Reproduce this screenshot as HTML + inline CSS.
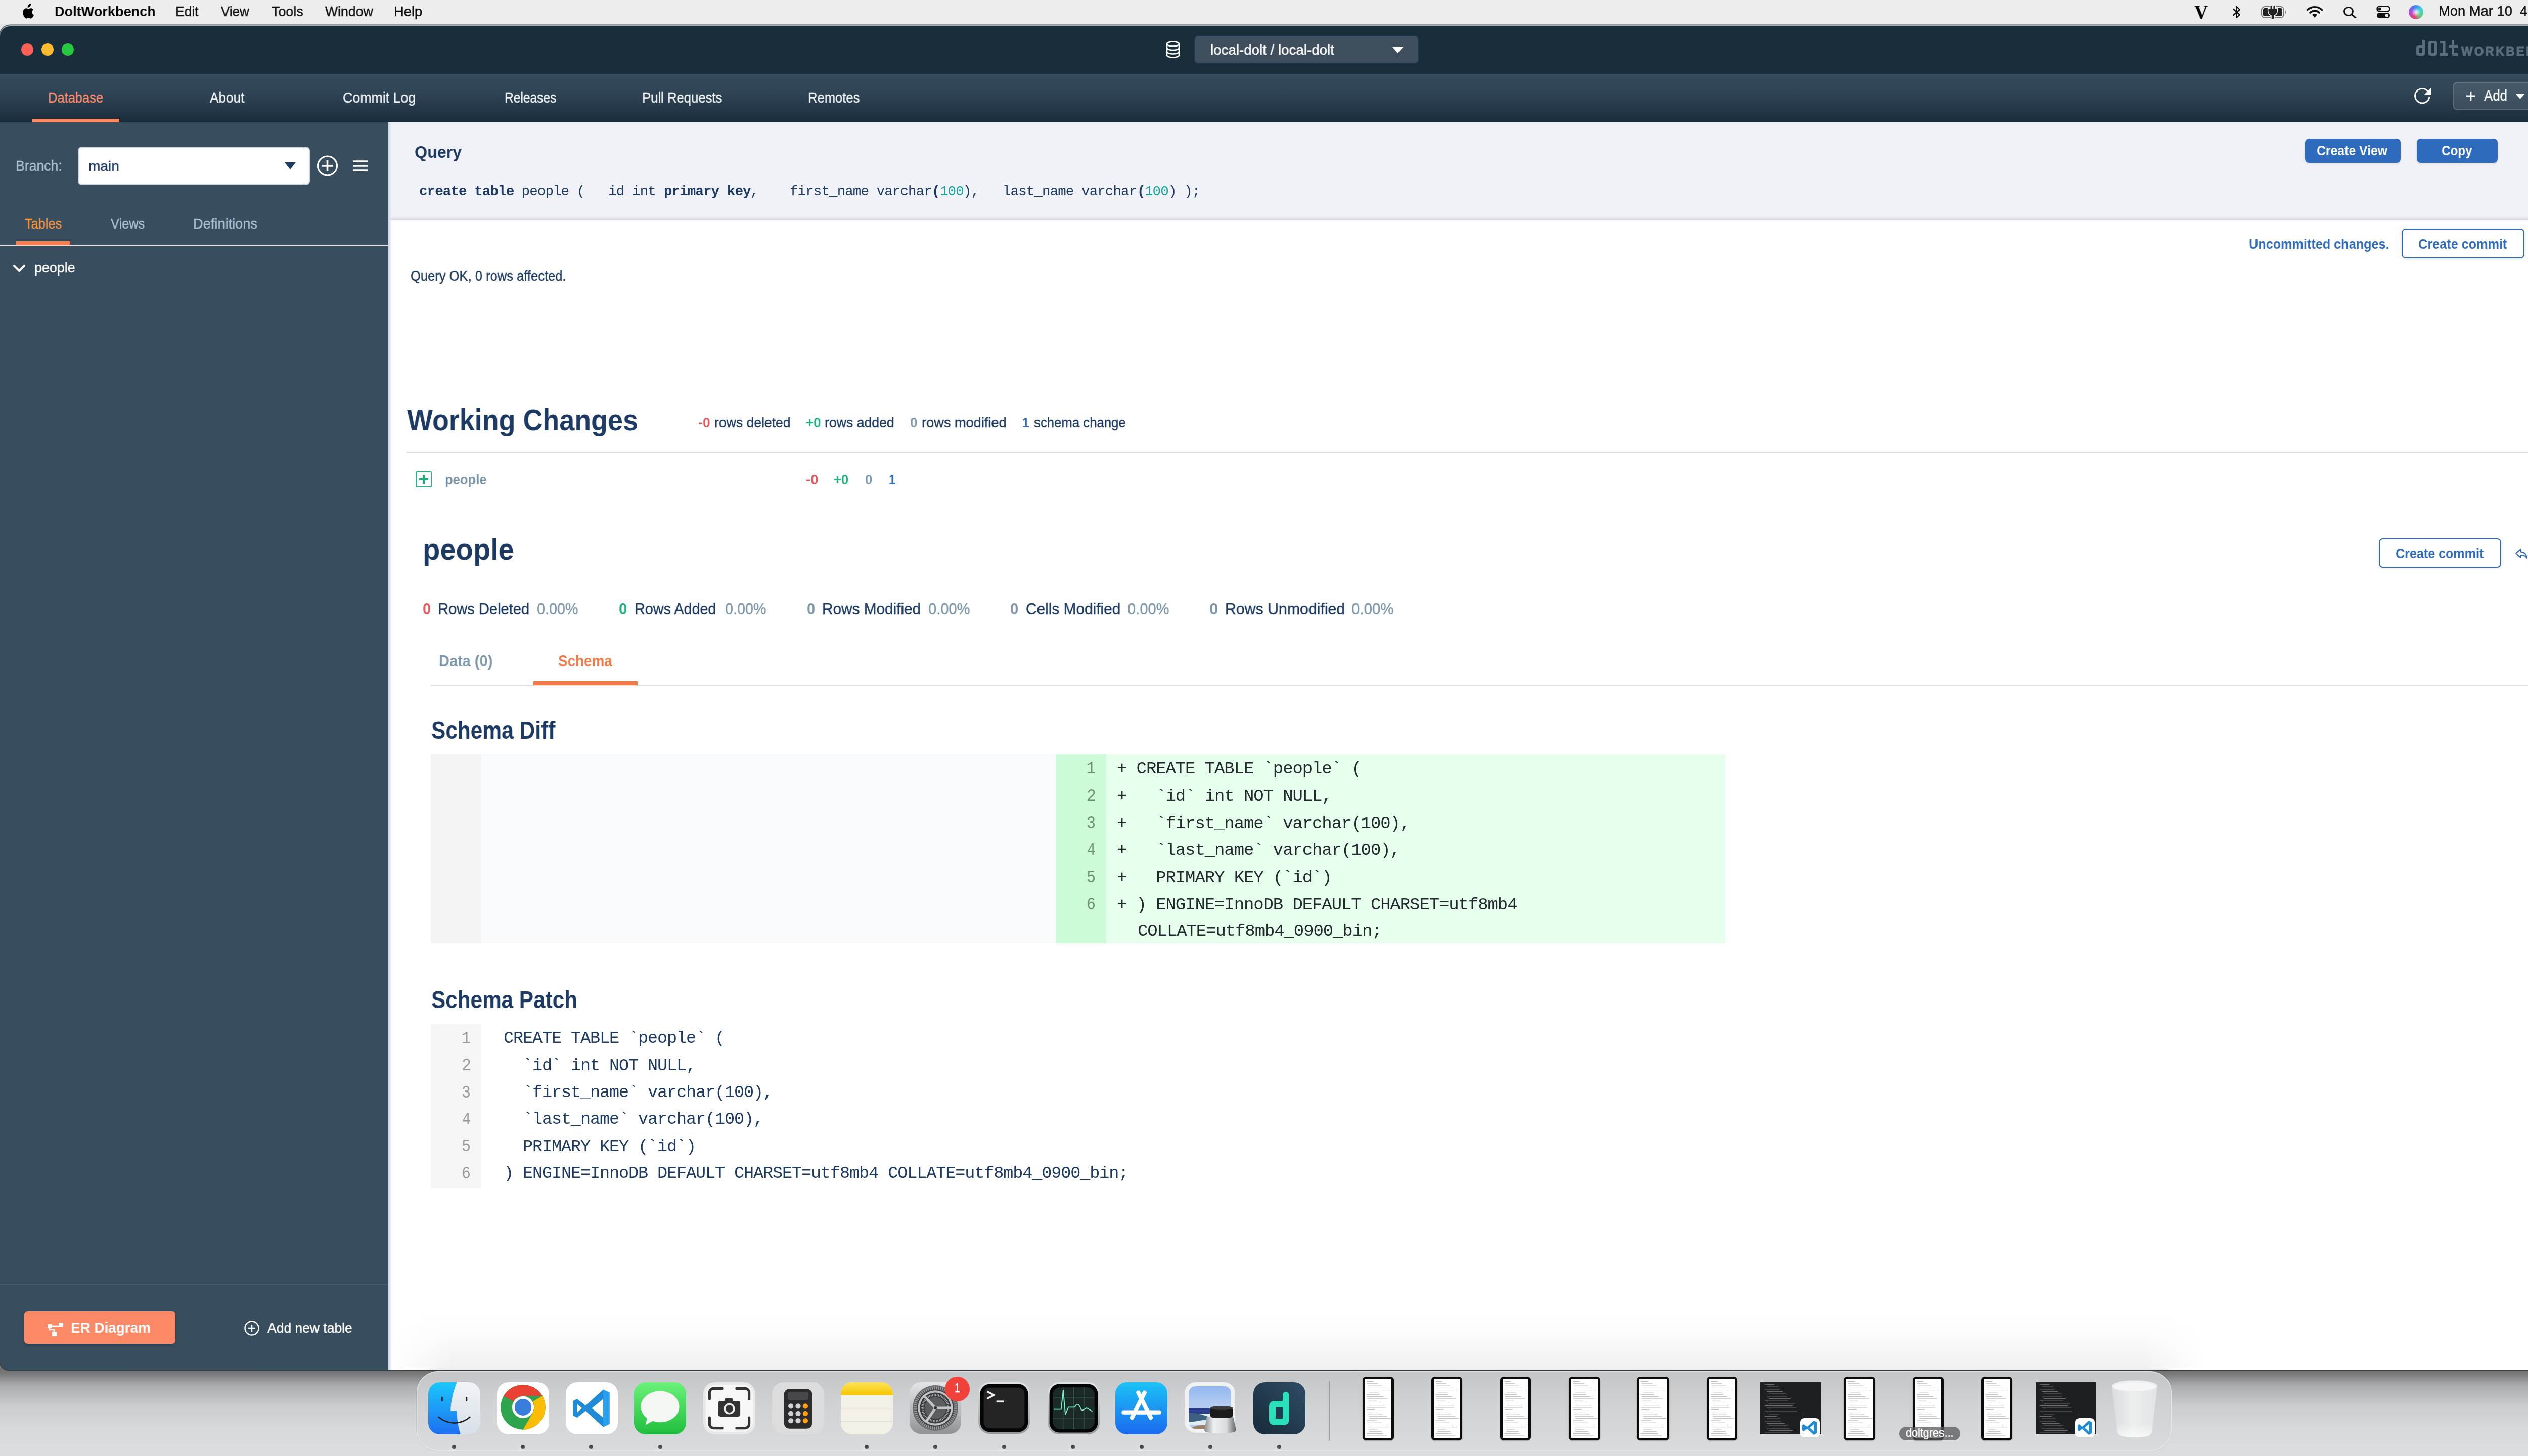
<!DOCTYPE html>
<html><head><meta charset="utf-8"><title>DoltWorkbench</title>
<style>
html,body{margin:0;padding:0;width:5120px;height:2880px;overflow:hidden;background:#dfe0e2;font-family:"Liberation Sans",sans-serif;}
#root{position:relative;width:5120px;height:2880px;overflow:hidden;}
</style></head><body><div id="root">
<div style="position:absolute;left:0px;top:0px;width:5120px;height:2880px;background:linear-gradient(180deg,#e3e4e6 0%,#dcdddf 100%);"></div>
<div style="position:absolute;left:0px;top:0px;width:5120px;height:48px;background:#ededed;"></div>
<div style="position:absolute;left:0px;top:2670px;width:5120px;height:210px;background:linear-gradient(180deg,rgba(0,0,0,0.45) 0px,rgba(0,0,0,0.5) 36px,rgba(0,0,0,0.45) 48px,rgba(0,0,0,0.22) 71px,rgba(0,0,0,0.08) 111px,rgba(0,0,0,0.02) 156px,rgba(0,0,0,0) 206px);"></div>
<div style="position:absolute;left:0px;top:49.5px;width:5118px;height:2660.5px;background:#384e5f;border-radius:20px 20px 18px 18px;overflow:hidden;box-shadow:0 0 0 1.5px rgba(40,44,48,0.75);"></div>
<div style="position:absolute;left:0px;top:49.5px;width:5118px;height:96.5px;background:#192d3b;border-radius:20px 20px 0 0;box-shadow:inset 0 2px 0 #a3adb9;"></div>
<div style="position:absolute;left:0px;top:146px;width:5118px;height:96px;background:linear-gradient(180deg,#354b5e 0%,#2e4354 40%,#243748 75%,#1a2d3c 98%,#122230 100%);"></div>
<div style="position:absolute;left:0px;top:242px;width:768px;height:2468px;background:#384e5f;border-radius:0 0 0 18px;"></div>
<div style="position:absolute;left:768px;top:242px;width:4350px;height:2468px;background:#ffffff;border-radius:0 0 18px 0;"></div>
<div style="position:absolute;left:768px;top:242px;width:4350px;height:194px;background:linear-gradient(180deg,#f0f2f8 0px,#f0f2f8 186px,#e4e6ee 190px,#d8dae2 193px,#e9eaef 194px);"></div>
<div style="position:absolute;left:768px;top:242px;width:7px;height:2468px;background:linear-gradient(90deg,#cdd9e6 0%,#d6e0ea 30%,rgba(226,232,242,0.6) 70%,rgba(255,255,255,0) 100%);"></div>
<svg style="position:absolute;left:40px;top:7px;" width="28" height="32" viewBox="0 0 28 32" preserveAspectRatio="none"><path fill="#000" d="M19.6 5.1c1.2-1.5 2-3.5 1.8-5.1-1.7.1-3.8 1.2-5 2.6-1.1 1.3-2 3.3-1.8 5.2 1.9.2 3.8-1 5-2.7zM23.4 17c0-3.4 2.8-5 2.9-5.1-1.6-2.3-4-2.6-4.9-2.6-2.1-.2-4.1 1.2-5.1 1.2-1.1 0-2.7-1.2-4.4-1.2-2.3 0-4.4 1.3-5.5 3.4-2.4 4.1-.6 10.2 1.7 13.5 1.1 1.6 2.5 3.5 4.2 3.4 1.7-.1 2.3-1.1 4.4-1.1 2 0 2.6 1.1 4.4 1.1 1.8 0 3-1.7 4.1-3.3 1.3-1.9 1.8-3.7 1.8-3.8-.1 0-3.6-1.4-3.6-5.5z"/></svg>
<div style="position:absolute;left:108.01px;top:8.97px;font-family:'Liberation Sans', sans-serif;font-size:27.33px;line-height:27.33px;font-weight:700;color:#000;white-space:pre;will-change:transform;transform-origin:0 23.13px;transform:scale(0.9918,1.0000);">DoltWorkbench</div>
<div style="position:absolute;left:347.06px;top:8.97px;font-family:'Liberation Sans', sans-serif;font-size:27.33px;line-height:27.33px;font-weight:400;color:#111;white-space:pre;will-change:transform;-webkit-text-stroke:0.45px #111;transform-origin:0 23.13px;transform:scale(0.9676,1.0000);">Edit</div>
<div style="position:absolute;left:437.00px;top:8.97px;font-family:'Liberation Sans', sans-serif;font-size:27.33px;line-height:27.33px;font-weight:400;color:#111;white-space:pre;will-change:transform;-webkit-text-stroke:0.45px #111;transform-origin:0 23.13px;transform:scale(0.9494,1.0000);">View</div>
<div style="position:absolute;left:537.00px;top:8.97px;font-family:'Liberation Sans', sans-serif;font-size:27.33px;line-height:27.33px;font-weight:400;color:#111;white-space:pre;will-change:transform;-webkit-text-stroke:0.45px #111;transform-origin:0 23.13px;transform:scale(0.9825,1.0000);">Tools</div>
<div style="position:absolute;left:643.00px;top:8.97px;font-family:'Liberation Sans', sans-serif;font-size:27.33px;line-height:27.33px;font-weight:400;color:#111;white-space:pre;will-change:transform;-webkit-text-stroke:0.45px #111;transform-origin:0 23.13px;transform:scale(0.9752,1.0000);">Window</div>
<div style="position:absolute;left:779.00px;top:8.97px;font-family:'Liberation Sans', sans-serif;font-size:27.33px;line-height:27.33px;font-weight:400;color:#111;white-space:pre;will-change:transform;-webkit-text-stroke:0.45px #111;">Help</div>
<div style="position:absolute;left:4822.95px;top:9.16px;font-family:'Liberation Sans', sans-serif;font-size:26.74px;line-height:26.74px;font-weight:400;color:#111;white-space:pre;will-change:transform;-webkit-text-stroke:0.45px #111;transform-origin:0 22.64px;transform:scale(1.0231,1.0000);">Mon Mar 10</div>
<div style="position:absolute;left:4984.00px;top:9.16px;font-family:'Liberation Sans', sans-serif;font-size:26.74px;line-height:26.74px;font-weight:400;color:#111;white-space:pre;will-change:transform;-webkit-text-stroke:0.45px #111;transform-origin:0 22.64px;transform:scale(0.9869,1.0000);">4:06 PM</div>
<div style="position:absolute;left:4340.00px;top:4.28px;font-family:'Liberation Serif', serif;font-size:39.24px;line-height:39.24px;font-weight:700;color:#000;white-space:pre;will-change:transform;transform-origin:0 33.22px;transform:scale(0.9643,1.0000);">V</div>
<svg style="position:absolute;left:4412px;top:10px;" width="23" height="28" viewBox="0 0 22 28" preserveAspectRatio="none"><path d="M5 8 L17 19 L11 25 V3 L17 9 L5 20" fill="none" stroke="#111" stroke-width="2.4" stroke-linejoin="round" stroke-linecap="round"/></svg>
<svg style="position:absolute;left:4470px;top:10px;" width="55" height="28" viewBox="0 0 55 28" preserveAspectRatio="none"><rect x="3" y="3" width="44" height="22" rx="6.5" fill="none" stroke="#7a7a7a" stroke-width="2"/><rect x="6" y="6" width="38" height="16" rx="3.5" fill="#222"/><path d="M50 10 Q53 14 50 18 Z" fill="#888"/><g stroke="#ededed" stroke-width="3.2" fill="#ededed"><rect x="20.5" y="1" width="3" height="7"/><rect x="26.5" y="1" width="3" height="7"/><path d="M16.5 7 H33.5 V12 a8.5 8.5 0 0 1 -17 0 Z"/><rect x="22.8" y="19" width="4.4" height="8"/></g><g fill="#222"><rect x="20.5" y="1" width="3" height="7"/><rect x="26.5" y="1" width="3" height="7"/><path d="M16.5 7 H33.5 V12 a8.5 8.5 0 0 1 -17 0 Z"/><rect x="22.8" y="19" width="4.4" height="8"/></g></svg>
<svg style="position:absolute;left:4560px;top:11px;" width="36" height="25" viewBox="0 0 36 25" preserveAspectRatio="none"><path d="M18 24 L13 18 A8 8 0 0 1 23 18 Z" fill="#111"/><path d="M9 14 A13 13 0 0 1 27 14" fill="none" stroke="#111" stroke-width="3.6" stroke-linecap="round"/><path d="M3.5 8.5 A21 21 0 0 1 32.5 8.5" fill="none" stroke="#111" stroke-width="3.6" stroke-linecap="round"/></svg>
<svg style="position:absolute;left:4634px;top:12px;" width="27" height="24" viewBox="0 0 27 25" preserveAspectRatio="none"><circle cx="11" cy="11" r="8.5" fill="none" stroke="#111" stroke-width="3"/><path d="M17 17 L25 24" stroke="#111" stroke-width="3.2" stroke-linecap="round"/></svg>
<svg style="position:absolute;left:4700px;top:11px;" width="28" height="26" viewBox="0 0 28 26" preserveAspectRatio="none"><rect x="1.5" y="1.5" width="25" height="10" rx="5" fill="none" stroke="#111" stroke-width="2.6"/><circle cx="7" cy="6.5" r="3" fill="#111"/><rect x="1" y="14" width="26" height="11" rx="5.5" fill="#111"/><circle cx="21" cy="19.5" r="3.2" fill="#eee"/></svg>
<div style="position:absolute;left:4764px;top:10px;width:29px;height:28px;border-radius:50%;background:radial-gradient(circle at 50% 50%,rgba(255,255,255,0.9) 0,rgba(255,255,255,0) 45%),conic-gradient(from 200deg,#e8407a,#b347d8,#3f7ef0,#3fd0d8,#5fd080,#e8407a);"></div>
<div style="position:absolute;left:42px;top:86px;width:24px;height:24px;background:#fe5f57;border-radius:50%;"></div>
<div style="position:absolute;left:82px;top:86px;width:24px;height:24px;background:#febc2e;border-radius:50%;"></div>
<div style="position:absolute;left:122px;top:86px;width:24px;height:24px;background:#28c840;border-radius:50%;"></div>
<svg style="position:absolute;left:2304px;top:81px;" width="32" height="34" viewBox="0 0 32 34" preserveAspectRatio="none"><ellipse cx="16" cy="6" rx="12" ry="4.5" fill="none" stroke="#fff" stroke-width="2.6"/><path d="M4 6 V28 A12 4.5 0 0 0 28 28 V6" fill="none" stroke="#fff" stroke-width="2.6"/><path d="M4 13.5 A12 4.5 0 0 0 28 13.5 M4 21 A12 4.5 0 0 0 28 21" fill="none" stroke="#fff" stroke-width="2.6"/></svg>
<div style="position:absolute;left:2362px;top:70px;width:444px;height:56px;background:#3e4e5c;border:2px solid #1f3656;border-radius:7px;box-sizing:border-box;"></div>
<div style="position:absolute;left:2394.02px;top:83.61px;font-family:'Liberation Sans', sans-serif;font-size:28.34px;line-height:28.34px;font-weight:400;color:#ffffff;white-space:pre;will-change:transform;-webkit-text-stroke:0.45px #ffffff;transform-origin:0 23.99px;transform:scale(0.9780,1.0000);">local-dolt / local-dolt</div>
<svg style="position:absolute;left:2754px;top:93px;" width="21" height="12" viewBox="0 0 21 12" preserveAspectRatio="none"><path d="M0 0 H21 L10.5 12 Z" fill="#fff"/></svg>
<svg style="position:absolute;left:4779px;top:79px;" width="82" height="32" viewBox="0 0 82 32" preserveAspectRatio="none"><g fill="#5c6e7d"><path d="M12 0 H17 V27 a4 4 0 0 1 -4 4 H4 a4 4 0 0 1 -4 -4 V15 a4 4 0 0 1 4 -4 H12 Z M5 16 V26 H12 V16 Z"/><path d="M28 2 H37 a4 4 0 0 1 4 4 V27 a4 4 0 0 1 -4 4 H28 a4 4 0 0 1 -4 -4 V6 a4 4 0 0 1 4 -4 Z M29 7 V26 H36 V7 Z"/><path d="M47 2 H57.5 V26 H63 V31 H47 V26 H52.5 V7 H47 Z"/><path d="M70 0 H75 V10 H82 V15 H75 V26 H82 V31 H74 a4 4 0 0 1 -4 -4 V15 H65 V10 H70 Z"/></g></svg>
<div style="position:absolute;left:4868.00px;top:88.35px;font-family:'Liberation Sans', sans-serif;font-size:26.16px;line-height:26.16px;font-weight:700;color:#5c6e7d;white-space:pre;will-change:transform;letter-spacing:3.5px;transform-origin:0 22.15px;transform:scale(0.9117,1.0000);-webkit-text-stroke:1.2px #5c6e7d;">WORKBENCH</div>
<div style="position:absolute;left:95.28px;top:177.90px;font-family:'Liberation Sans', sans-serif;font-size:29.65px;line-height:29.65px;font-weight:400;color:#f98b6c;white-space:pre;will-change:transform;-webkit-text-stroke:0.45px #f98b6c;transform-origin:0 25.10px;transform:scale(0.8601,1.0000);">Database</div>
<div style="position:absolute;left:64px;top:235px;width:172px;height:7px;background:#fc8a63;"></div>
<div style="position:absolute;left:415.00px;top:177.90px;font-family:'Liberation Sans', sans-serif;font-size:29.65px;line-height:29.65px;font-weight:400;color:#eef2f5;white-space:pre;will-change:transform;-webkit-text-stroke:0.45px #eef2f5;transform-origin:0 25.10px;transform:scale(0.8821,1.0000);">About</div>
<div style="position:absolute;left:678.10px;top:177.90px;font-family:'Liberation Sans', sans-serif;font-size:29.65px;line-height:29.65px;font-weight:400;color:#eef2f5;white-space:pre;will-change:transform;-webkit-text-stroke:0.45px #eef2f5;transform-origin:0 25.10px;transform:scale(0.9028,1.0000);">Commit Log</div>
<div style="position:absolute;left:998.34px;top:177.90px;font-family:'Liberation Sans', sans-serif;font-size:29.65px;line-height:29.65px;font-weight:400;color:#eef2f5;white-space:pre;will-change:transform;-webkit-text-stroke:0.45px #eef2f5;transform-origin:0 25.10px;transform:scale(0.8282,1.0000);">Releases</div>
<div style="position:absolute;left:1270.27px;top:177.90px;font-family:'Liberation Sans', sans-serif;font-size:29.65px;line-height:29.65px;font-weight:400;color:#eef2f5;white-space:pre;will-change:transform;-webkit-text-stroke:0.45px #eef2f5;transform-origin:0 25.10px;transform:scale(0.8664,1.0000);">Pull Requests</div>
<div style="position:absolute;left:1598.27px;top:177.90px;font-family:'Liberation Sans', sans-serif;font-size:29.65px;line-height:29.65px;font-weight:400;color:#eef2f5;white-space:pre;will-change:transform;-webkit-text-stroke:0.45px #eef2f5;transform-origin:0 25.10px;transform:scale(0.8637,1.0000);">Remotes</div>
<svg style="position:absolute;left:4774px;top:172px;" width="36" height="36" viewBox="0 0 36 36" preserveAspectRatio="none"><path d="M29.5 11 A14.3 14.3 0 1 0 31 19.5" fill="none" stroke="#fff" stroke-width="2.8"/><path d="M34 2 V15.5 H20.5 Z" fill="#fff"/></svg>
<div style="position:absolute;left:4852px;top:162px;width:159px;height:56px;background:rgba(255,255,255,0.10);border:2px solid rgba(255,255,255,0.16);border-radius:8px;box-sizing:border-box;"></div>
<svg style="position:absolute;left:4877px;top:180px;" width="20" height="20" viewBox="0 0 20 20" preserveAspectRatio="none"><path d="M10 1 V19 M1 10 H19" stroke="#fff" stroke-width="2.8"/></svg>
<div style="position:absolute;left:4913.00px;top:175.39px;font-family:'Liberation Sans', sans-serif;font-size:29.07px;line-height:29.07px;font-weight:400;color:#ffffff;white-space:pre;will-change:transform;-webkit-text-stroke:0.45px #ffffff;transform-origin:0 24.61px;transform:scale(0.8906,1.0000);">Add</div>
<svg style="position:absolute;left:4976px;top:186px;" width="17" height="10" viewBox="0 0 17 10" preserveAspectRatio="none"><path d="M0 0 H17 L8.5 10 Z" fill="#fff"/></svg>
<div style="position:absolute;left:31.16px;top:313.52px;font-family:'Liberation Sans', sans-serif;font-size:28.92px;line-height:28.92px;font-weight:400;color:#a8bfd2;white-space:pre;will-change:transform;-webkit-text-stroke:0.45px #a8bfd2;transform-origin:0 24.48px;transform:scale(0.9206,1.0000);">Branch:</div>
<div style="position:absolute;left:154px;top:290px;width:459px;height:76px;background:#fff;border:2px solid #cbd3db;border-radius:8px;box-sizing:border-box;"></div>
<div style="position:absolute;left:175.01px;top:314.01px;font-family:'Liberation Sans', sans-serif;font-size:28.34px;line-height:28.34px;font-weight:400;color:#1c3a63;white-space:pre;will-change:transform;-webkit-text-stroke:0.45px #1c3a63;transform-origin:0 23.99px;transform:scale(0.9890,1.0000);">main</div>
<svg style="position:absolute;left:563px;top:321px;" width="22" height="14" viewBox="0 0 22 14" preserveAspectRatio="none"><path d="M0 0 H22 L11 14 Z" fill="#1c3a63"/></svg>
<svg style="position:absolute;left:626px;top:307px;" width="43" height="42" viewBox="0 0 43 42" preserveAspectRatio="none"><circle cx="21.5" cy="21" r="19" fill="none" stroke="#fff" stroke-width="3.2"/><path d="M21.5 10 V32 M10.5 21 H32.5" stroke="#fff" stroke-width="3.6"/></svg>
<svg style="position:absolute;left:698px;top:317px;" width="29" height="22" viewBox="0 0 29 22" preserveAspectRatio="none"><path d="M0 2 H29 M0 11 H29 M0 20 H29" stroke="#fff" stroke-width="3.6"/></svg>
<div style="position:absolute;left:49.00px;top:428.01px;font-family:'Liberation Sans', sans-serif;font-size:28.34px;line-height:28.34px;font-weight:400;color:#f5923e;white-space:pre;will-change:transform;-webkit-text-stroke:0.45px #f5923e;transform-origin:0 23.99px;transform:scale(0.8933,1.0000);">Tables</div>
<div style="position:absolute;left:219.00px;top:428.01px;font-family:'Liberation Sans', sans-serif;font-size:28.34px;line-height:28.34px;font-weight:400;color:#a8c0d4;white-space:pre;will-change:transform;-webkit-text-stroke:0.45px #a8c0d4;transform-origin:0 23.99px;transform:scale(0.8947,1.0000);">Views</div>
<div style="position:absolute;left:382.08px;top:428.01px;font-family:'Liberation Sans', sans-serif;font-size:28.34px;line-height:28.34px;font-weight:400;color:#a8c0d4;white-space:pre;will-change:transform;-webkit-text-stroke:0.45px #a8c0d4;transform-origin:0 23.99px;transform:scale(0.9608,1.0000);">Definitions</div>
<div style="position:absolute;left:0px;top:484px;width:768px;height:3px;background:#dde3e8;"></div>
<div style="position:absolute;left:32px;top:477px;width:107px;height:8px;background:#f97c4b;"></div>
<svg style="position:absolute;left:25px;top:522px;" width="26" height="19" viewBox="0 0 26 19" preserveAspectRatio="none"><path d="M3 4 L13 14 L23 4" fill="none" stroke="#fff" stroke-width="4.2" stroke-linecap="round" stroke-linejoin="round"/></svg>
<div style="position:absolute;left:68.05px;top:515.01px;font-family:'Liberation Sans', sans-serif;font-size:28.34px;line-height:28.34px;font-weight:400;color:#ffffff;white-space:pre;will-change:transform;-webkit-text-stroke:0.45px #ffffff;transform-origin:0 23.99px;transform:scale(0.9482,1.0000);">people</div>
<div style="position:absolute;left:0px;top:2540px;width:768px;height:2px;background:#465b6b;"></div>
<div style="position:absolute;left:48px;top:2594px;width:299px;height:64px;background:#fd8a66;border-radius:7px;box-shadow:0 2px 6px rgba(0,0,0,0.18);"></div>
<svg style="position:absolute;left:94px;top:2616px;" width="32" height="28" viewBox="0 0 32 28" preserveAspectRatio="none"><rect x="0" y="3" width="9" height="8" rx="1" fill="#fff"/><rect x="22" y="0" width="9" height="8" rx="1" fill="#fff"/><rect x="9" y="18" width="9" height="9" rx="1" fill="#fff"/><path d="M4 10 V14 H13 V18 M9 7 H22" stroke="#fff" stroke-width="2.4" fill="none"/></svg>
<div style="position:absolute;left:140.04px;top:2612.39px;font-family:'Liberation Sans', sans-serif;font-size:29.07px;line-height:29.07px;font-weight:700;color:#ffffff;white-space:pre;will-change:transform;transform-origin:0 24.61px;transform:scale(0.9581,1.0000);">ER Diagram</div>
<svg style="position:absolute;left:482px;top:2611px;" width="32" height="32" viewBox="0 0 32 32" preserveAspectRatio="none"><circle cx="16" cy="16" r="13.5" fill="none" stroke="#fff" stroke-width="2.4"/><path d="M16 9 V23 M9 16 H23" stroke="#fff" stroke-width="2.4"/></svg>
<div style="position:absolute;left:529.00px;top:2612.01px;font-family:'Liberation Sans', sans-serif;font-size:28.34px;line-height:28.34px;font-weight:400;color:#ffffff;white-space:pre;will-change:transform;-webkit-text-stroke:0.45px #ffffff;transform-origin:0 23.99px;transform:scale(0.9341,1.0000);">Add new table</div>
<div style="position:absolute;left:820.01px;top:285.32px;font-family:'Liberation Sans', sans-serif;font-size:32.70px;line-height:32.70px;font-weight:700;color:#1c3a63;white-space:pre;will-change:transform;transform-origin:0 27.68px;transform:scale(0.9861,1.0000);">Query</div>
<div style="position:absolute;left:4559px;top:274px;width:189px;height:48px;background:#2e6bbd;border-radius:8px;box-shadow:0 2px 5px rgba(0,0,0,0.12);"></div>
<div style="position:absolute;left:4582.13px;top:283.01px;font-family:'Liberation Sans', sans-serif;font-size:28.34px;line-height:28.34px;font-weight:700;color:#fff;white-space:pre;will-change:transform;transform-origin:0 23.99px;transform:scale(0.8747,1.0000);">Create View</div>
<div style="position:absolute;left:4780px;top:274px;width:160px;height:48px;background:#2e6bbd;border-radius:8px;box-shadow:0 2px 5px rgba(0,0,0,0.12);"></div>
<div style="position:absolute;left:4829.14px;top:283.01px;font-family:'Liberation Sans', sans-serif;font-size:28.34px;line-height:28.34px;font-weight:700;color:#fff;white-space:pre;will-change:transform;transform-origin:0 23.99px;transform:scale(0.8563,1.0000);">Copy</div>
<svg style="position:absolute;left:5005px;top:285px;" width="34" height="21" viewBox="0 0 34 21" preserveAspectRatio="none"><path d="M4 17 L17 4 L30 17" fill="none" stroke="#1b2f4d" stroke-width="6" stroke-linecap="round" stroke-linejoin="round"/></svg>
<div style="position:absolute;left:829.00px;top:364.94px;font-family:'Liberation Mono', monospace;font-size:27.50px;line-height:27.50px;font-weight:700;color:#1c3a63;white-space:pre;will-change:transform;letter-spacing:-0.9px;">create table</div>
<div style="position:absolute;left:1016.20px;top:364.94px;font-family:'Liberation Mono', monospace;font-size:27.50px;line-height:27.50px;font-weight:400;color:#1c3a63;white-space:pre;will-change:transform;letter-spacing:-0.9px;"> people (   id int </div>
<div style="position:absolute;left:1312.60px;top:364.94px;font-family:'Liberation Mono', monospace;font-size:27.50px;line-height:27.50px;font-weight:700;color:#1c3a63;white-space:pre;will-change:transform;letter-spacing:-0.9px;">primary key</div>
<div style="position:absolute;left:1484.20px;top:364.94px;font-family:'Liberation Mono', monospace;font-size:27.50px;line-height:27.50px;font-weight:400;color:#1c3a63;white-space:pre;will-change:transform;letter-spacing:-0.9px;">,    first_name varchar</div>
<div style="position:absolute;left:1843.00px;top:364.94px;font-family:'Liberation Mono', monospace;font-size:27.50px;line-height:27.50px;font-weight:700;color:#1c3a63;white-space:pre;will-change:transform;letter-spacing:-0.9px;">(</div>
<div style="position:absolute;left:1858.60px;top:364.94px;font-family:'Liberation Mono', monospace;font-size:27.50px;line-height:27.50px;font-weight:400;color:#1aa39b;white-space:pre;will-change:transform;letter-spacing:-0.9px;">100</div>
<div style="position:absolute;left:1905.40px;top:364.94px;font-family:'Liberation Mono', monospace;font-size:27.50px;line-height:27.50px;font-weight:400;color:#1c3a63;white-space:pre;will-change:transform;letter-spacing:-0.9px;">),   last_name varchar</div>
<div style="position:absolute;left:2248.60px;top:364.94px;font-family:'Liberation Mono', monospace;font-size:27.50px;line-height:27.50px;font-weight:700;color:#1c3a63;white-space:pre;will-change:transform;letter-spacing:-0.9px;">(</div>
<div style="position:absolute;left:2264.20px;top:364.94px;font-family:'Liberation Mono', monospace;font-size:27.50px;line-height:27.50px;font-weight:400;color:#1aa39b;white-space:pre;will-change:transform;letter-spacing:-0.9px;">100</div>
<div style="position:absolute;left:2311.00px;top:364.94px;font-family:'Liberation Mono', monospace;font-size:27.50px;line-height:27.50px;font-weight:400;color:#1c3a63;white-space:pre;will-change:transform;letter-spacing:-0.9px;">) );</div>
<div style="position:absolute;left:4448.11px;top:468.01px;font-family:'Liberation Sans', sans-serif;font-size:28.34px;line-height:28.34px;font-weight:700;color:#2e6bbd;white-space:pre;will-change:transform;transform-origin:0 23.99px;transform:scale(0.8906,1.0000);">Uncommitted changes.</div>
<div style="position:absolute;left:4750px;top:452px;width:243px;height:59px;background:#fff;border:2px solid #2e6bbd;border-radius:8px;box-sizing:border-box;box-shadow:0 2px 5px rgba(0,0,0,0.10);"></div>
<div style="position:absolute;left:4783.11px;top:468.01px;font-family:'Liberation Sans', sans-serif;font-size:28.34px;line-height:28.34px;font-weight:700;color:#2e6bbd;white-space:pre;will-change:transform;transform-origin:0 23.99px;transform:scale(0.8912,1.0000);">Create commit</div>
<svg style="position:absolute;left:5019px;top:471px;" width="26" height="22" viewBox="0 0 25 22" preserveAspectRatio="none"><path d="M11 3 L2 11 L11 19 V14.5 C16 14 20 15.5 23 20 C22 13 18 8.5 11 8 Z" fill="none" stroke="#2e6bbd" stroke-width="2" stroke-linejoin="round"/></svg>
<div style="position:absolute;left:812.10px;top:531.01px;font-family:'Liberation Sans', sans-serif;font-size:28.34px;line-height:28.34px;font-weight:400;color:#1c3a63;white-space:pre;will-change:transform;-webkit-text-stroke:0.45px #1c3a63;transform-origin:0 23.99px;transform:scale(0.9016,1.0000);">Query OK, 0 rows affected.</div>
<div style="position:absolute;left:805.00px;top:801.05px;font-family:'Liberation Sans', sans-serif;font-size:59.59px;line-height:59.59px;font-weight:700;color:#1c3a63;white-space:pre;will-change:transform;transform-origin:0 50.45px;transform:scale(0.9042,1.0000);">Working Changes</div>
<div style="position:absolute;left:1381.06px;top:820.51px;font-family:'Liberation Sans', sans-serif;font-size:28.34px;line-height:28.34px;font-weight:600;color:#e4575c;white-space:pre;will-change:transform;transform-origin:0 23.99px;transform:scale(0.9388,1.0000);">-0</div>
<div style="position:absolute;left:1413.06px;top:820.51px;font-family:'Liberation Sans', sans-serif;font-size:28.34px;line-height:28.34px;font-weight:400;color:#1c3a63;white-space:pre;will-change:transform;-webkit-text-stroke:0.45px #1c3a63;transform-origin:0 23.99px;transform:scale(0.9375,1.0000);">rows deleted</div>
<div style="position:absolute;left:1594.08px;top:820.51px;font-family:'Liberation Sans', sans-serif;font-size:28.34px;line-height:28.34px;font-weight:600;color:#1fb27a;white-space:pre;will-change:transform;transform-origin:0 23.99px;transform:scale(0.9167,1.0000);">+0</div>
<div style="position:absolute;left:1631.06px;top:820.51px;font-family:'Liberation Sans', sans-serif;font-size:28.34px;line-height:28.34px;font-weight:400;color:#1c3a63;white-space:pre;will-change:transform;-webkit-text-stroke:0.45px #1c3a63;transform-origin:0 23.99px;transform:scale(0.9395,1.0000);">rows added</div>
<div style="position:absolute;left:1800.07px;top:820.51px;font-family:'Liberation Sans', sans-serif;font-size:28.34px;line-height:28.34px;font-weight:600;color:#7d97ac;white-space:pre;will-change:transform;transform-origin:0 23.99px;transform:scale(0.9286,1.0000);">0</div>
<div style="position:absolute;left:1823.04px;top:820.51px;font-family:'Liberation Sans', sans-serif;font-size:28.34px;line-height:28.34px;font-weight:400;color:#1c3a63;white-space:pre;will-change:transform;-webkit-text-stroke:0.45px #1c3a63;transform-origin:0 23.99px;transform:scale(0.9593,1.0000);">rows modified</div>
<div style="position:absolute;left:2022.14px;top:820.51px;font-family:'Liberation Sans', sans-serif;font-size:28.34px;line-height:28.34px;font-weight:600;color:#2e6bbd;white-space:pre;will-change:transform;transform-origin:0 23.99px;transform:scale(0.8571,1.0000);">1</div>
<div style="position:absolute;left:2045.00px;top:820.51px;font-family:'Liberation Sans', sans-serif;font-size:28.34px;line-height:28.34px;font-weight:400;color:#1c3a63;white-space:pre;will-change:transform;-webkit-text-stroke:0.45px #1c3a63;transform-origin:0 23.99px;transform:scale(0.9084,1.0000);">schema change</div>
<div style="position:absolute;left:804px;top:894px;width:4284px;height:2px;background:#dddfe2;"></div>
<div style="position:absolute;left:822px;top:932px;width:32px;height:32px;border:2px solid #2db37f;border-radius:2px;box-sizing:border-box;"></div>
<svg style="position:absolute;left:828px;top:938px;" width="20" height="20" viewBox="0 0 20 20" preserveAspectRatio="none"><path d="M10 1 V19 M1 10 H19" stroke="#1fae74" stroke-width="4.2"/></svg>
<div style="position:absolute;left:880.10px;top:934.01px;font-family:'Liberation Sans', sans-serif;font-size:28.34px;line-height:28.34px;font-weight:700;color:#7a95ab;white-space:pre;will-change:transform;transform-origin:0 23.99px;transform:scale(0.9047,1.0000);">people</div>
<div style="position:absolute;left:1594.01px;top:934.62px;font-family:'Liberation Sans', sans-serif;font-size:27.62px;line-height:27.62px;font-weight:600;color:#e4575c;white-space:pre;will-change:transform;transform-origin:0 23.38px;transform:scale(0.9916,1.0000);">-0</div>
<div style="position:absolute;left:1649.07px;top:934.62px;font-family:'Liberation Sans', sans-serif;font-size:27.62px;line-height:27.62px;font-weight:600;color:#1fb27a;white-space:pre;will-change:transform;transform-origin:0 23.38px;transform:scale(0.9295,1.0000);">+0</div>
<div style="position:absolute;left:1711.07px;top:934.62px;font-family:'Liberation Sans', sans-serif;font-size:27.62px;line-height:27.62px;font-weight:600;color:#7d97ac;white-space:pre;will-change:transform;transform-origin:0 23.38px;transform:scale(0.9286,1.0000);">0</div>
<div style="position:absolute;left:1758.14px;top:934.62px;font-family:'Liberation Sans', sans-serif;font-size:27.62px;line-height:27.62px;font-weight:600;color:#2e6bbd;white-space:pre;will-change:transform;transform-origin:0 23.38px;transform:scale(0.8571,1.0000);">1</div>
<div style="position:absolute;left:836.17px;top:1056.55px;font-family:'Liberation Sans', sans-serif;font-size:59.59px;line-height:59.59px;font-weight:700;color:#1c3a63;white-space:pre;will-change:transform;transform-origin:0 50.45px;transform:scale(0.9422,1.0000);">people</div>
<div style="position:absolute;left:4705px;top:1065px;width:242px;height:58px;background:#fff;border:2px solid #2e6bbd;border-radius:8px;box-sizing:border-box;box-shadow:0 2px 5px rgba(0,0,0,0.10);"></div>
<div style="position:absolute;left:4738.11px;top:1080.01px;font-family:'Liberation Sans', sans-serif;font-size:28.34px;line-height:28.34px;font-weight:700;color:#2e6bbd;white-space:pre;will-change:transform;transform-origin:0 23.99px;transform:scale(0.8861,1.0000);">Create commit</div>
<svg style="position:absolute;left:4974px;top:1083px;" width="26" height="23" viewBox="0 0 25 22" preserveAspectRatio="none"><path d="M11 3 L2 11 L11 19 V14.5 C16 14 20 15.5 23 20 C22 13 18 8.5 11 8 Z" fill="none" stroke="#2e6bbd" stroke-width="2" stroke-linejoin="round"/></svg>
<div style="position:absolute;left:836.06px;top:1188.67px;font-family:'Liberation Sans', sans-serif;font-size:31.10px;line-height:31.10px;font-weight:700;color:#e4575c;white-space:pre;will-change:transform;transform-origin:0 26.33px;transform:scale(0.9375,1.0000);">0</div>
<div style="position:absolute;left:866.13px;top:1188.67px;font-family:'Liberation Sans', sans-serif;font-size:31.10px;line-height:31.10px;font-weight:400;color:#1c3a63;white-space:pre;will-change:transform;-webkit-text-stroke:0.45px #1c3a63;transform-origin:0 26.33px;transform:scale(0.9355,1.0000);">Rows Deleted</div>
<div style="position:absolute;left:1062.08px;top:1188.67px;font-family:'Liberation Sans', sans-serif;font-size:31.10px;line-height:31.10px;font-weight:400;color:#7d97ac;white-space:pre;will-change:transform;-webkit-text-stroke:0.45px #7d97ac;transform-origin:0 26.33px;transform:scale(0.9247,1.0000);">0.00%</div>
<div style="position:absolute;left:1224.06px;top:1188.67px;font-family:'Liberation Sans', sans-serif;font-size:31.10px;line-height:31.10px;font-weight:700;color:#1fb27a;white-space:pre;will-change:transform;transform-origin:0 26.33px;transform:scale(0.9375,1.0000);">0</div>
<div style="position:absolute;left:1255.15px;top:1188.67px;font-family:'Liberation Sans', sans-serif;font-size:31.10px;line-height:31.10px;font-weight:400;color:#1c3a63;white-space:pre;will-change:transform;-webkit-text-stroke:0.45px #1c3a63;transform-origin:0 26.33px;transform:scale(0.9248,1.0000);">Rows Added</div>
<div style="position:absolute;left:1434.08px;top:1188.67px;font-family:'Liberation Sans', sans-serif;font-size:31.10px;line-height:31.10px;font-weight:400;color:#7d97ac;white-space:pre;will-change:transform;-webkit-text-stroke:0.45px #7d97ac;transform-origin:0 26.33px;transform:scale(0.9247,1.0000);">0.00%</div>
<div style="position:absolute;left:1596.06px;top:1188.67px;font-family:'Liberation Sans', sans-serif;font-size:31.10px;line-height:31.10px;font-weight:700;color:#7d97ac;white-space:pre;will-change:transform;transform-origin:0 26.33px;transform:scale(0.9375,1.0000);">0</div>
<div style="position:absolute;left:1626.09px;top:1188.67px;font-family:'Liberation Sans', sans-serif;font-size:31.10px;line-height:31.10px;font-weight:400;color:#1c3a63;white-space:pre;will-change:transform;-webkit-text-stroke:0.45px #1c3a63;transform-origin:0 26.33px;transform:scale(0.9570,1.0000);">Rows Modified</div>
<div style="position:absolute;left:1836.06px;top:1188.67px;font-family:'Liberation Sans', sans-serif;font-size:31.10px;line-height:31.10px;font-weight:400;color:#7d97ac;white-space:pre;will-change:transform;-webkit-text-stroke:0.45px #7d97ac;transform-origin:0 26.33px;transform:scale(0.9362,1.0000);">0.00%</div>
<div style="position:absolute;left:1998.06px;top:1188.67px;font-family:'Liberation Sans', sans-serif;font-size:31.10px;line-height:31.10px;font-weight:700;color:#7d97ac;white-space:pre;will-change:transform;transform-origin:0 26.33px;transform:scale(0.9375,1.0000);">0</div>
<div style="position:absolute;left:2029.04px;top:1188.67px;font-family:'Liberation Sans', sans-serif;font-size:31.10px;line-height:31.10px;font-weight:400;color:#1c3a63;white-space:pre;will-change:transform;-webkit-text-stroke:0.45px #1c3a63;transform-origin:0 26.33px;transform:scale(0.9586,1.0000);">Cells Modified</div>
<div style="position:absolute;left:2230.06px;top:1188.67px;font-family:'Liberation Sans', sans-serif;font-size:31.10px;line-height:31.10px;font-weight:400;color:#7d97ac;white-space:pre;will-change:transform;-webkit-text-stroke:0.45px #7d97ac;transform-origin:0 26.33px;transform:scale(0.9362,1.0000);">0.00%</div>
<div style="position:absolute;left:2392.00px;top:1188.67px;font-family:'Liberation Sans', sans-serif;font-size:31.10px;line-height:31.10px;font-weight:700;color:#7d97ac;white-space:pre;will-change:transform;">0</div>
<div style="position:absolute;left:2423.05px;top:1188.67px;font-family:'Liberation Sans', sans-serif;font-size:31.10px;line-height:31.10px;font-weight:400;color:#1c3a63;white-space:pre;will-change:transform;-webkit-text-stroke:0.45px #1c3a63;transform-origin:0 26.33px;transform:scale(0.9735,1.0000);">Rows Unmodified</div>
<div style="position:absolute;left:2673.05px;top:1188.67px;font-family:'Liberation Sans', sans-serif;font-size:31.10px;line-height:31.10px;font-weight:400;color:#7d97ac;white-space:pre;will-change:transform;-webkit-text-stroke:0.45px #7d97ac;transform-origin:0 26.33px;transform:scale(0.9478,1.0000);">0.00%</div>
<div style="position:absolute;left:868.17px;top:1292.18px;font-family:'Liberation Sans', sans-serif;font-size:31.69px;line-height:31.69px;font-weight:700;color:#7d97ac;white-space:pre;will-change:transform;transform-origin:0 26.82px;transform:scale(0.9147,1.0000);">Data (0)</div>
<div style="position:absolute;left:1104.00px;top:1292.18px;font-family:'Liberation Sans', sans-serif;font-size:31.69px;line-height:31.69px;font-weight:700;color:#f47a4a;white-space:pre;will-change:transform;transform-origin:0 26.82px;transform:scale(0.8780,1.0000);">Schema</div>
<div style="position:absolute;left:852px;top:1354px;width:4188px;height:2px;background:#dbe0e6;"></div>
<div style="position:absolute;left:1055px;top:1348px;width:206px;height:7px;background:#f47a44;"></div>
<div style="position:absolute;left:853.13px;top:1419.78px;font-family:'Liberation Sans', sans-serif;font-size:48.69px;line-height:48.69px;font-weight:700;color:#1c3a63;white-space:pre;will-change:transform;transform-origin:0 41.22px;transform:scale(0.8714,1.0000);">Schema Diff</div>
<div style="position:absolute;left:852px;top:1492px;width:100px;height:374px;background:#f4f4f5;"></div>
<div style="position:absolute;left:952px;top:1492px;width:1136px;height:374px;background:#f9fafc;"></div>
<div style="position:absolute;left:2088px;top:1492px;width:100px;height:374px;background:#cdfad7;"></div>
<div style="position:absolute;left:2188px;top:1492px;width:1224px;height:374px;background:#e6ffed;"></div>
<div style="position:absolute;left:2149.33px;top:1502.57px;font-family:'Liberation Mono', monospace;font-size:35.81px;line-height:35.81px;font-weight:400;color:#6e8f76;white-space:pre;will-change:transform;transform-origin:0 27.43px;transform:scale(0.8333,1.0000);">1</div>
<div style="position:absolute;left:2209.00px;top:1503.96px;font-family:'Liberation Mono', monospace;font-size:34.00px;line-height:34.00px;font-weight:400;color:#24292e;white-space:pre;will-change:transform;letter-spacing:-1.1px;">+ CREATE TABLE `people` (</div>
<div style="position:absolute;left:2149.24px;top:1556.57px;font-family:'Liberation Mono', monospace;font-size:35.81px;line-height:35.81px;font-weight:400;color:#6e8f76;white-space:pre;will-change:transform;transform-origin:0 27.43px;transform:scale(0.8824,1.0000);">2</div>
<div style="position:absolute;left:2209.00px;top:1557.96px;font-family:'Liberation Mono', monospace;font-size:34.00px;line-height:34.00px;font-weight:400;color:#24292e;white-space:pre;will-change:transform;letter-spacing:-1.1px;">+   `id` int NOT NULL,</div>
<div style="position:absolute;left:2149.33px;top:1610.57px;font-family:'Liberation Mono', monospace;font-size:35.81px;line-height:35.81px;font-weight:400;color:#6e8f76;white-space:pre;will-change:transform;transform-origin:0 27.43px;transform:scale(0.8333,1.0000);">3</div>
<div style="position:absolute;left:2209.00px;top:1611.96px;font-family:'Liberation Mono', monospace;font-size:34.00px;line-height:34.00px;font-weight:400;color:#24292e;white-space:pre;will-change:transform;letter-spacing:-1.1px;">+   `first_name` varchar(100),</div>
<div style="position:absolute;left:2150.21px;top:1663.57px;font-family:'Liberation Mono', monospace;font-size:35.81px;line-height:35.81px;font-weight:400;color:#6e8f76;white-space:pre;will-change:transform;transform-origin:0 27.43px;transform:scale(0.7895,1.0000);">4</div>
<div style="position:absolute;left:2209.00px;top:1664.96px;font-family:'Liberation Mono', monospace;font-size:34.00px;line-height:34.00px;font-weight:400;color:#24292e;white-space:pre;will-change:transform;letter-spacing:-1.1px;">+   `last_name` varchar(100),</div>
<div style="position:absolute;left:2149.33px;top:1717.57px;font-family:'Liberation Mono', monospace;font-size:35.81px;line-height:35.81px;font-weight:400;color:#6e8f76;white-space:pre;will-change:transform;transform-origin:0 27.43px;transform:scale(0.8333,1.0000);">5</div>
<div style="position:absolute;left:2209.00px;top:1718.96px;font-family:'Liberation Mono', monospace;font-size:34.00px;line-height:34.00px;font-weight:400;color:#24292e;white-space:pre;will-change:transform;letter-spacing:-1.1px;">+   PRIMARY KEY (`id`)</div>
<div style="position:absolute;left:2149.33px;top:1771.57px;font-family:'Liberation Mono', monospace;font-size:35.81px;line-height:35.81px;font-weight:400;color:#6e8f76;white-space:pre;will-change:transform;transform-origin:0 27.43px;transform:scale(0.8333,1.0000);">6</div>
<div style="position:absolute;left:2209.00px;top:1772.96px;font-family:'Liberation Mono', monospace;font-size:34.00px;line-height:34.00px;font-weight:400;color:#24292e;white-space:pre;will-change:transform;letter-spacing:-1.1px;">+ ) ENGINE=InnoDB DEFAULT CHARSET=utf8mb4</div>
<div style="position:absolute;left:2250.00px;top:1824.96px;font-family:'Liberation Mono', monospace;font-size:34.00px;line-height:34.00px;font-weight:400;color:#24292e;white-space:pre;will-change:transform;letter-spacing:-1.1px;">COLLATE=utf8mb4_0900_bin;</div>
<div style="position:absolute;left:853.12px;top:1954.40px;font-family:'Liberation Sans', sans-serif;font-size:47.97px;line-height:47.97px;font-weight:700;color:#1c3a63;white-space:pre;will-change:transform;transform-origin:0 40.60px;transform:scale(0.8813,1.0000);">Schema Patch</div>
<div style="position:absolute;left:852px;top:2026px;width:100px;height:324px;background:#f5f5f5;"></div>
<div style="position:absolute;left:913.33px;top:2036.57px;font-family:'Liberation Mono', monospace;font-size:35.81px;line-height:35.81px;font-weight:400;color:#999999;white-space:pre;will-change:transform;transform-origin:0 27.43px;transform:scale(0.8333,1.0000);">1</div>
<div style="position:absolute;left:996.00px;top:2038.34px;font-family:'Liberation Mono', monospace;font-size:33.50px;line-height:33.50px;font-weight:400;color:#1c3a63;white-space:pre;will-change:transform;letter-spacing:-1.1px;">CREATE TABLE `people` (</div>
<div style="position:absolute;left:913.24px;top:2090.07px;font-family:'Liberation Mono', monospace;font-size:35.81px;line-height:35.81px;font-weight:400;color:#999999;white-space:pre;will-change:transform;transform-origin:0 27.43px;transform:scale(0.8824,1.0000);">2</div>
<div style="position:absolute;left:996.00px;top:2091.84px;font-family:'Liberation Mono', monospace;font-size:33.50px;line-height:33.50px;font-weight:400;color:#1c3a63;white-space:pre;will-change:transform;letter-spacing:-1.1px;">  `id` int NOT NULL,</div>
<div style="position:absolute;left:913.33px;top:2143.57px;font-family:'Liberation Mono', monospace;font-size:35.81px;line-height:35.81px;font-weight:400;color:#999999;white-space:pre;will-change:transform;transform-origin:0 27.43px;transform:scale(0.8333,1.0000);">3</div>
<div style="position:absolute;left:996.00px;top:2145.34px;font-family:'Liberation Mono', monospace;font-size:33.50px;line-height:33.50px;font-weight:400;color:#1c3a63;white-space:pre;will-change:transform;letter-spacing:-1.1px;">  `first_name` varchar(100),</div>
<div style="position:absolute;left:914.21px;top:2196.57px;font-family:'Liberation Mono', monospace;font-size:35.81px;line-height:35.81px;font-weight:400;color:#999999;white-space:pre;will-change:transform;transform-origin:0 27.43px;transform:scale(0.7895,1.0000);">4</div>
<div style="position:absolute;left:996.00px;top:2198.34px;font-family:'Liberation Mono', monospace;font-size:33.50px;line-height:33.50px;font-weight:400;color:#1c3a63;white-space:pre;will-change:transform;letter-spacing:-1.1px;">  `last_name` varchar(100),</div>
<div style="position:absolute;left:913.33px;top:2250.07px;font-family:'Liberation Mono', monospace;font-size:35.81px;line-height:35.81px;font-weight:400;color:#999999;white-space:pre;will-change:transform;transform-origin:0 27.43px;transform:scale(0.8333,1.0000);">5</div>
<div style="position:absolute;left:996.00px;top:2251.84px;font-family:'Liberation Mono', monospace;font-size:33.50px;line-height:33.50px;font-weight:400;color:#1c3a63;white-space:pre;will-change:transform;letter-spacing:-1.1px;">  PRIMARY KEY (`id`)</div>
<div style="position:absolute;left:913.33px;top:2303.57px;font-family:'Liberation Mono', monospace;font-size:35.81px;line-height:35.81px;font-weight:400;color:#999999;white-space:pre;will-change:transform;transform-origin:0 27.43px;transform:scale(0.8333,1.0000);">6</div>
<div style="position:absolute;left:996.00px;top:2305.34px;font-family:'Liberation Mono', monospace;font-size:33.50px;line-height:33.50px;font-weight:400;color:#1c3a63;white-space:pre;will-change:transform;letter-spacing:-1.1px;">) ENGINE=InnoDB DEFAULT CHARSET=utf8mb4 COLLATE=utf8mb4_0900_bin;</div>
<div style="position:absolute;left:773px;top:2600px;width:3587px;height:109px;background:linear-gradient(180deg,rgba(0,0,0,0) 0%,rgba(0,0,0,0.015) 40%,rgba(0,0,0,0.06) 100%);-webkit-mask-image:linear-gradient(90deg,transparent 0,#000 120px,#000 calc(100% - 120px),transparent 100%);"></div>
<div style="position:absolute;left:824px;top:2712px;width:3471px;height:158px;background:linear-gradient(180deg,#c4c5c7 0%,#d0d1d3 40%,#dadbdd 100%);border-radius:42px;box-shadow:inset 0 0 0 1.5px rgba(255,255,255,0.45), 0 0 0 1px rgba(0,0,0,0.08);"></div>
<svg style="position:absolute;left:847px;top:2734px;" width="103" height="103" viewBox="0 0 100 100" preserveAspectRatio="none"><defs><linearGradient id="fb" x1="0" y1="0" x2="0" y2="1"><stop offset="0" stop-color="#1ac8fb"/><stop offset="1" stop-color="#1e6ff1"/></linearGradient><linearGradient id="fw" x1="0" y1="0" x2="0" y2="1"><stop offset="0" stop-color="#f1f3f6"/><stop offset="1" stop-color="#d8dfe8"/></linearGradient><clipPath id="fc"><rect x="0" y="0" width="100" height="100" rx="22"/></clipPath></defs><g clip-path="url(#fc)"><rect width="100" height="100" fill="url(#fw)"/><path d="M0 0 H55 C48 18 43 38 43 55 H55 C55 72 58 88 62 100 H0 Z" fill="url(#fb)"/></g><path d="M20 67 C38 82 62 82 80 67" fill="none" stroke="#222" stroke-width="2.6" stroke-linecap="round"/><rect x="25" y="28" width="3" height="9" rx="1.5" fill="#222"/><rect x="72" y="28" width="3" height="9" rx="1.5" fill="#222"/></svg>
<svg style="position:absolute;left:983px;top:2734px;" width="103" height="103" viewBox="0 0 100 100" preserveAspectRatio="none"><rect width="100" height="100" rx="22" fill="#fff"/><circle cx="50" cy="48" r="43" fill="#2ea44f"/><path d="M50 5 A43 43 0 0 1 87.2 26.5 L50 26.5 A21.5 21.5 0 0 0 31.4 37.2 L12.8 26.5 A43 43 0 0 1 50 5Z" fill="#e94235"/><path d="M87.2 26.5 A43 43 0 0 1 50 91 L68.6 58.8 A21.5 21.5 0 0 0 68.6 37.2 Z" fill="#fbbc04"/><circle cx="50" cy="48" r="21" fill="#fff"/><circle cx="50" cy="48" r="16" fill="#3b7ddd"/></svg>
<svg style="position:absolute;left:1119px;top:2734px;" width="103" height="103" viewBox="0 0 100 100" preserveAspectRatio="none"><rect width="100" height="100" rx="22" fill="#fff"/><path d="M72 14 L84 20 V80 L72 86 L38 55 L22 68 L14 64 V36 L22 32 L38 45 Z M72 32 L50 50 L72 68 Z M22 42 V58 L31 50 Z" fill="#1f8ad6"/><path d="M72 14 L84 20 V80 L72 86 Z" fill="#2aa0f0"/></svg>
<svg style="position:absolute;left:1254px;top:2734px;" width="103" height="103" viewBox="0 0 100 100" preserveAspectRatio="none"><defs><linearGradient id="mg" x1="0" y1="0" x2="0" y2="1"><stop offset="0" stop-color="#6bf27a"/><stop offset="1" stop-color="#1fbe3c"/></linearGradient></defs><rect width="100" height="100" rx="22" fill="url(#mg)"/><ellipse cx="50" cy="47" rx="37" ry="30" fill="#f4f6f4"/><path d="M26 66 L22 82 L40 72 Z" fill="#f4f6f4"/></svg>
<svg style="position:absolute;left:1391px;top:2734px;" width="103" height="103" viewBox="0 0 100 100" preserveAspectRatio="none"><rect width="100" height="100" rx="22" fill="#e9e9ea"/><rect x="5" y="5" width="90" height="90" rx="18" fill="#f7f7f7"/><path d="M12 32 V20 a8 8 0 0 1 8 -8 H36 M64 12 H80 a8 8 0 0 1 8 8 V32 M88 68 V80 a8 8 0 0 1 -8 8 H64 M36 88 H20 a8 8 0 0 1 -8 -8 V68" fill="none" stroke="#333" stroke-width="5" stroke-linecap="round"/><rect x="29" y="36" width="42" height="30" rx="4" fill="#333"/><rect x="41" y="31" width="16" height="8" rx="2" fill="#333"/><circle cx="50" cy="51" r="9" fill="none" stroke="#eee" stroke-width="3.5"/></svg>
<svg style="position:absolute;left:1527px;top:2734px;" width="103" height="103" viewBox="0 0 100 100" preserveAspectRatio="none"><rect width="100" height="100" rx="22" fill="#dcdcdd"/><rect x="23" y="13" width="54" height="76" rx="10" fill="#2b2b2d"/><rect x="30" y="19" width="40" height="15" rx="3" fill="#48484b"/><g fill="#cfcfd1"><circle cx="36" cy="46" r="5"/><circle cx="50" cy="46" r="5"/><circle cx="36" cy="60" r="5"/><circle cx="50" cy="60" r="5"/><circle cx="36" cy="74" r="5"/><circle cx="50" cy="74" r="5"/></g><g fill="#ff9f0a"><circle cx="64" cy="46" r="5"/><circle cx="64" cy="60" r="5"/><circle cx="64" cy="74" r="5"/></g></svg>
<svg style="position:absolute;left:1663px;top:2734px;" width="103" height="103" viewBox="0 0 100 100" preserveAspectRatio="none"><defs><linearGradient id="ng" x1="0" y1="0" x2="0" y2="1"><stop offset="0" stop-color="#fde35a"/><stop offset="1" stop-color="#f7c600"/></linearGradient></defs><clipPath id="nc"><rect width="100" height="100" rx="22"/></clipPath><g clip-path="url(#nc)"><rect width="100" height="100" fill="#f3f0e6"/><rect width="100" height="25" fill="url(#ng)"/><path d="M0 50 H100 M0 75 H100" stroke="#d9d5cc" stroke-width="1.2"/></g></svg>
<svg style="position:absolute;left:1799px;top:2734px;" width="102" height="102" viewBox="0 0 100 100" preserveAspectRatio="none"><defs><linearGradient id="sg2" x1="0" y1="0" x2="0" y2="1"><stop offset="0" stop-color="#e2e6e9"/><stop offset="0.55" stop-color="#b9bcbf"/><stop offset="1" stop-color="#8f9194"/></linearGradient><radialGradient id="sg3" cx="50%" cy="50%" r="50%"><stop offset="0.7" stop-color="#2a2b2d"/><stop offset="1" stop-color="#6f7073"/></radialGradient></defs><rect width="100" height="100" rx="22" fill="url(#sg2)"/><circle cx="50" cy="50" r="44" fill="url(#sg3)"/><circle cx="50" cy="50" r="39" fill="none" stroke="#96979a" stroke-width="6" stroke-dasharray="2.2 1.9"/><circle cx="50" cy="50" r="34" fill="#bfc0c3"/><circle cx="50" cy="50" r="30" fill="#3b3c3e"/><circle cx="50" cy="50" r="25" fill="none" stroke="#a9aaad" stroke-width="4" stroke-dasharray="1.6 1.4"/><circle cx="50" cy="50" r="21" fill="#5c5d60"/><path d="M50 50 L31 30 M50 50 L80 50 M50 50 L34 74" stroke="#c4c5c8" stroke-width="5" stroke-linecap="round"/><circle cx="50" cy="50" r="3" fill="#333"/></svg>
<div style="position:absolute;left:1869px;top:2723px;width:49px;height:49px;background:#f0413a;border-radius:50%;"></div>
<div style="position:absolute;left:1888.25px;top:2733.47px;font-family:'Liberation Sans', sans-serif;font-size:25.44px;line-height:25.44px;font-weight:400;color:#fff;white-space:pre;will-change:transform;-webkit-text-stroke:0.45px #fff;transform-origin:0 21.53px;transform:scale(0.7500,1.0000);">1</div>
<svg style="position:absolute;left:1935px;top:2734px;" width="102" height="102" viewBox="0 0 100 100" preserveAspectRatio="none"><defs><linearGradient id="tr" x1="0" y1="0" x2="0" y2="1"><stop offset="0" stop-color="#dde6ea"/><stop offset="1" stop-color="#959a9e"/></linearGradient></defs><rect width="100" height="100" rx="22" fill="url(#tr)"/><rect x="3.5" y="3.5" width="93" height="93" rx="19" fill="#050505"/><rect x="10.5" y="10.5" width="79" height="79" rx="12" fill="#242424"/><path d="M17 18 L30 25 L17 32" fill="none" stroke="#f4f4f4" stroke-width="3.6"/><path d="M35 37.5 H50" stroke="#f4f4f4" stroke-width="3.6"/></svg>
<svg style="position:absolute;left:2072px;top:2734px;" width="103" height="103" viewBox="0 0 100 100" preserveAspectRatio="none"><defs><linearGradient id="tr2" x1="0" y1="0" x2="0" y2="1"><stop offset="0" stop-color="#dde6ea"/><stop offset="1" stop-color="#959a9e"/></linearGradient></defs><rect width="100" height="100" rx="22" fill="url(#tr2)"/><rect x="3.5" y="3.5" width="93" height="93" rx="19" fill="#050505"/><rect x="10" y="10" width="80" height="80" rx="14" fill="#1b2a27"/><path d="M10 30 H90 M10 50 H90 M10 70 H90 M30 10 V90 M50 10 V90 M70 10 V90" stroke="#2f5a4f" stroke-width="1"/><path d="M12 52 H26 L30 15 L34 62 L40 48 H52 C56 40 60 40 64 52 C68 58 72 48 76 50 L86 56" fill="none" stroke="#7ef0c8" stroke-width="1.8"/></svg>
<svg style="position:absolute;left:2206px;top:2734px;" width="103" height="103" viewBox="0 0 100 100" preserveAspectRatio="none"><defs><linearGradient id="ag" x1="0" y1="0" x2="0" y2="1"><stop offset="0" stop-color="#1bc3f7"/><stop offset="1" stop-color="#1a69ee"/></linearGradient></defs><rect width="100" height="100" rx="22" fill="url(#ag)"/><path d="M44 20 L68 68 M56 20 L32 68 M16 58 H84" stroke="#fff" stroke-width="8" stroke-linecap="round"/></svg>
<svg style="position:absolute;left:2343px;top:2734px;" width="103" height="103" viewBox="0 0 103 103" preserveAspectRatio="none"><defs><linearGradient id="pv" x1="0" y1="0" x2="0" y2="1"><stop offset="0" stop-color="#8db3ee"/><stop offset="0.45" stop-color="#b3cbf0"/></linearGradient><linearGradient id="lp" x1="0" y1="0" x2="1" y2="0"><stop offset="0" stop-color="#8a8c90"/><stop offset="0.3" stop-color="#eef0f2"/><stop offset="0.7" stop-color="#d8dadd"/><stop offset="1" stop-color="#5e6064"/></linearGradient><clipPath id="pc"><rect x="8" y="8" width="84" height="84" rx="14"/></clipPath></defs><rect width="100" height="100" rx="22" fill="#f1f1f2"/><g clip-path="url(#pc)"><rect x="0" y="0" width="100" height="100" fill="url(#pv)"/><rect x="0" y="52" width="100" height="10" fill="#2b3f8e"/><rect x="0" y="62" width="100" height="22" fill="#dfeef5"/><path d="M0 62 Q20 58 40 66 T100 64 V72 Q60 70 30 76 T0 74Z" fill="#3d5f80"/><path d="M10 92 Q30 80 55 88 V100 H10Z" fill="#9c7f62"/></g><path d="M44 68 H96 L102 95 Q100 101 70 101 Q40 101 39 95 Z" fill="url(#lp)"/><rect x="50" y="50" width="46" height="20" rx="6" fill="#1b1b1c"/><ellipse cx="73" cy="51" rx="22" ry="4" fill="#3a3a3c"/></svg>
<svg style="position:absolute;left:2479px;top:2734px;" width="103" height="103" viewBox="0 0 100 100" preserveAspectRatio="none"><defs><linearGradient id="dg" x1="1" y1="0" x2="0" y2="1"><stop offset="0" stop-color="#2f4c64"/><stop offset="1" stop-color="#172b3b"/></linearGradient></defs><rect width="100" height="100" rx="22" fill="url(#dg)"/><path d="M56.3 24.5 a6.1 6.1 0 0 1 12.2 0 V72.5 a10 10 0 0 1 -10 10 H40 a10 10 0 0 1 -10 -10 V46 a10 10 0 0 1 10 -10 H56.3 Z M42.7 48.5 V70 H56.3 V48.5 Z" fill="#2ae0bb" fill-rule="evenodd"/></svg>
<div style="position:absolute;left:894px;top:2858px;width:8px;height:8px;background:#4b4b4d;border-radius:50%;"></div>
<div style="position:absolute;left:1030px;top:2858px;width:8px;height:8px;background:#4b4b4d;border-radius:50%;"></div>
<div style="position:absolute;left:1165px;top:2858px;width:8px;height:8px;background:#4b4b4d;border-radius:50%;"></div>
<div style="position:absolute;left:1302px;top:2858px;width:8px;height:8px;background:#4b4b4d;border-radius:50%;"></div>
<div style="position:absolute;left:1710px;top:2858px;width:8px;height:8px;background:#4b4b4d;border-radius:50%;"></div>
<div style="position:absolute;left:1846px;top:2858px;width:8px;height:8px;background:#4b4b4d;border-radius:50%;"></div>
<div style="position:absolute;left:1982px;top:2858px;width:8px;height:8px;background:#4b4b4d;border-radius:50%;"></div>
<div style="position:absolute;left:2118px;top:2858px;width:8px;height:8px;background:#4b4b4d;border-radius:50%;"></div>
<div style="position:absolute;left:2254px;top:2858px;width:8px;height:8px;background:#4b4b4d;border-radius:50%;"></div>
<div style="position:absolute;left:2390px;top:2858px;width:8px;height:8px;background:#4b4b4d;border-radius:50%;"></div>
<div style="position:absolute;left:2526px;top:2858px;width:8px;height:8px;background:#4b4b4d;border-radius:50%;"></div>
<div style="position:absolute;left:2628px;top:2732px;width:2px;height:118px;background:#9b9c9e;"></div>
<div style="position:absolute;left:2695px;top:2723px;width:62px;height:126px;background:#0b0b0b;border-radius:7px;box-shadow:0 1px 2px rgba(0,0,0,0.3);"></div>
<svg style="position:absolute;left:2700px;top:2728px;" width="52" height="116" viewBox="0 0 52 116" preserveAspectRatio="none"><rect width="100" height="200" fill="#fff"/><rect x="3" y="4.0" width="14" height="0.9" fill="#b8b8b8"/><rect x="4" y="8.3" width="21" height="0.9" fill="#b8b8b8"/><rect x="5" y="12.6" width="28" height="0.9" fill="#b8b8b8"/><rect x="6" y="16.9" width="35" height="0.9" fill="#b8b8b8"/><rect x="7" y="21.2" width="42" height="0.9" fill="#b8b8b8"/><rect x="8" y="25.5" width="19" height="0.9" fill="#b8b8b8"/><rect x="3" y="29.8" width="26" height="0.9" fill="#b8b8b8"/><rect x="4" y="34.1" width="33" height="0.9" fill="#b8b8b8"/><rect x="5" y="38.4" width="40" height="0.9" fill="#b8b8b8"/><rect x="6" y="42.7" width="17" height="0.9" fill="#b8b8b8"/><rect x="7" y="47.0" width="24" height="0.9" fill="#b8b8b8"/><rect x="8" y="51.3" width="31" height="0.9" fill="#b8b8b8"/><rect x="3" y="55.6" width="38" height="0.9" fill="#b8b8b8"/><rect x="4" y="59.9" width="15" height="0.9" fill="#b8b8b8"/><rect x="5" y="64.2" width="22" height="0.9" fill="#b8b8b8"/><rect x="6" y="68.5" width="29" height="0.9" fill="#b8b8b8"/><rect x="7" y="72.8" width="36" height="0.9" fill="#b8b8b8"/><rect x="8" y="77.1" width="43" height="0.9" fill="#b8b8b8"/><rect x="3" y="81.4" width="20" height="0.9" fill="#b8b8b8"/><rect x="4" y="85.7" width="27" height="0.9" fill="#b8b8b8"/><rect x="5" y="90.0" width="34" height="0.9" fill="#b8b8b8"/><rect x="6" y="94.3" width="41" height="0.9" fill="#b8b8b8"/><rect x="7" y="98.6" width="18" height="0.9" fill="#b8b8b8"/><rect x="8" y="102.9" width="25" height="0.9" fill="#b8b8b8"/><rect x="3" y="107.2" width="32" height="0.9" fill="#b8b8b8"/><rect x="4" y="111.5" width="39" height="0.9" fill="#b8b8b8"/></svg>
<div style="position:absolute;left:2831px;top:2723px;width:61px;height:126px;background:#0b0b0b;border-radius:7px;box-shadow:0 1px 2px rgba(0,0,0,0.3);"></div>
<svg style="position:absolute;left:2836px;top:2728px;" width="51" height="116" viewBox="0 0 52 116" preserveAspectRatio="none"><rect width="100" height="200" fill="#fff"/><rect x="3" y="4.0" width="14" height="0.9" fill="#b8b8b8"/><rect x="4" y="8.3" width="21" height="0.9" fill="#b8b8b8"/><rect x="5" y="12.6" width="28" height="0.9" fill="#b8b8b8"/><rect x="6" y="16.9" width="35" height="0.9" fill="#b8b8b8"/><rect x="7" y="21.2" width="42" height="0.9" fill="#b8b8b8"/><rect x="8" y="25.5" width="19" height="0.9" fill="#b8b8b8"/><rect x="3" y="29.8" width="26" height="0.9" fill="#b8b8b8"/><rect x="4" y="34.1" width="33" height="0.9" fill="#b8b8b8"/><rect x="5" y="38.4" width="40" height="0.9" fill="#b8b8b8"/><rect x="6" y="42.7" width="17" height="0.9" fill="#b8b8b8"/><rect x="7" y="47.0" width="24" height="0.9" fill="#b8b8b8"/><rect x="8" y="51.3" width="31" height="0.9" fill="#b8b8b8"/><rect x="3" y="55.6" width="38" height="0.9" fill="#b8b8b8"/><rect x="4" y="59.9" width="15" height="0.9" fill="#b8b8b8"/><rect x="5" y="64.2" width="22" height="0.9" fill="#b8b8b8"/><rect x="6" y="68.5" width="29" height="0.9" fill="#b8b8b8"/><rect x="7" y="72.8" width="36" height="0.9" fill="#b8b8b8"/><rect x="8" y="77.1" width="43" height="0.9" fill="#b8b8b8"/><rect x="3" y="81.4" width="20" height="0.9" fill="#b8b8b8"/><rect x="4" y="85.7" width="27" height="0.9" fill="#b8b8b8"/><rect x="5" y="90.0" width="34" height="0.9" fill="#b8b8b8"/><rect x="6" y="94.3" width="41" height="0.9" fill="#b8b8b8"/><rect x="7" y="98.6" width="18" height="0.9" fill="#b8b8b8"/><rect x="8" y="102.9" width="25" height="0.9" fill="#b8b8b8"/><rect x="3" y="107.2" width="32" height="0.9" fill="#b8b8b8"/><rect x="4" y="111.5" width="39" height="0.9" fill="#b8b8b8"/></svg>
<div style="position:absolute;left:2967px;top:2723px;width:61px;height:126px;background:#0b0b0b;border-radius:7px;box-shadow:0 1px 2px rgba(0,0,0,0.3);"></div>
<svg style="position:absolute;left:2972px;top:2728px;" width="51" height="116" viewBox="0 0 52 116" preserveAspectRatio="none"><rect width="100" height="200" fill="#fff"/><rect x="3" y="4.0" width="14" height="0.9" fill="#b8b8b8"/><rect x="4" y="8.3" width="21" height="0.9" fill="#b8b8b8"/><rect x="5" y="12.6" width="28" height="0.9" fill="#b8b8b8"/><rect x="6" y="16.9" width="35" height="0.9" fill="#b8b8b8"/><rect x="7" y="21.2" width="42" height="0.9" fill="#b8b8b8"/><rect x="8" y="25.5" width="19" height="0.9" fill="#b8b8b8"/><rect x="3" y="29.8" width="26" height="0.9" fill="#b8b8b8"/><rect x="4" y="34.1" width="33" height="0.9" fill="#b8b8b8"/><rect x="5" y="38.4" width="40" height="0.9" fill="#b8b8b8"/><rect x="6" y="42.7" width="17" height="0.9" fill="#b8b8b8"/><rect x="7" y="47.0" width="24" height="0.9" fill="#b8b8b8"/><rect x="8" y="51.3" width="31" height="0.9" fill="#b8b8b8"/><rect x="3" y="55.6" width="38" height="0.9" fill="#b8b8b8"/><rect x="4" y="59.9" width="15" height="0.9" fill="#b8b8b8"/><rect x="5" y="64.2" width="22" height="0.9" fill="#b8b8b8"/><rect x="6" y="68.5" width="29" height="0.9" fill="#b8b8b8"/><rect x="7" y="72.8" width="36" height="0.9" fill="#b8b8b8"/><rect x="8" y="77.1" width="43" height="0.9" fill="#b8b8b8"/><rect x="3" y="81.4" width="20" height="0.9" fill="#b8b8b8"/><rect x="4" y="85.7" width="27" height="0.9" fill="#b8b8b8"/><rect x="5" y="90.0" width="34" height="0.9" fill="#b8b8b8"/><rect x="6" y="94.3" width="41" height="0.9" fill="#b8b8b8"/><rect x="7" y="98.6" width="18" height="0.9" fill="#b8b8b8"/><rect x="8" y="102.9" width="25" height="0.9" fill="#b8b8b8"/><rect x="3" y="107.2" width="32" height="0.9" fill="#b8b8b8"/><rect x="4" y="111.5" width="39" height="0.9" fill="#b8b8b8"/></svg>
<div style="position:absolute;left:3103px;top:2723px;width:62px;height:126px;background:#0b0b0b;border-radius:7px;box-shadow:0 1px 2px rgba(0,0,0,0.3);"></div>
<svg style="position:absolute;left:3108px;top:2728px;" width="52" height="116" viewBox="0 0 52 116" preserveAspectRatio="none"><rect width="100" height="200" fill="#fff"/><rect x="3" y="4.0" width="14" height="0.9" fill="#b8b8b8"/><rect x="4" y="8.3" width="21" height="0.9" fill="#b8b8b8"/><rect x="5" y="12.6" width="28" height="0.9" fill="#b8b8b8"/><rect x="6" y="16.9" width="35" height="0.9" fill="#b8b8b8"/><rect x="7" y="21.2" width="42" height="0.9" fill="#b8b8b8"/><rect x="8" y="25.5" width="19" height="0.9" fill="#b8b8b8"/><rect x="3" y="29.8" width="26" height="0.9" fill="#b8b8b8"/><rect x="4" y="34.1" width="33" height="0.9" fill="#b8b8b8"/><rect x="5" y="38.4" width="40" height="0.9" fill="#b8b8b8"/><rect x="6" y="42.7" width="17" height="0.9" fill="#b8b8b8"/><rect x="7" y="47.0" width="24" height="0.9" fill="#b8b8b8"/><rect x="8" y="51.3" width="31" height="0.9" fill="#b8b8b8"/><rect x="3" y="55.6" width="38" height="0.9" fill="#b8b8b8"/><rect x="4" y="59.9" width="15" height="0.9" fill="#b8b8b8"/><rect x="5" y="64.2" width="22" height="0.9" fill="#b8b8b8"/><rect x="6" y="68.5" width="29" height="0.9" fill="#b8b8b8"/><rect x="7" y="72.8" width="36" height="0.9" fill="#b8b8b8"/><rect x="8" y="77.1" width="43" height="0.9" fill="#b8b8b8"/><rect x="3" y="81.4" width="20" height="0.9" fill="#b8b8b8"/><rect x="4" y="85.7" width="27" height="0.9" fill="#b8b8b8"/><rect x="5" y="90.0" width="34" height="0.9" fill="#b8b8b8"/><rect x="6" y="94.3" width="41" height="0.9" fill="#b8b8b8"/><rect x="7" y="98.6" width="18" height="0.9" fill="#b8b8b8"/><rect x="8" y="102.9" width="25" height="0.9" fill="#b8b8b8"/><rect x="3" y="107.2" width="32" height="0.9" fill="#b8b8b8"/><rect x="4" y="111.5" width="39" height="0.9" fill="#b8b8b8"/></svg>
<div style="position:absolute;left:3237px;top:2723px;width:65px;height:126px;background:#0b0b0b;border-radius:7px;box-shadow:0 1px 2px rgba(0,0,0,0.3);"></div>
<svg style="position:absolute;left:3242px;top:2728px;" width="55" height="116" viewBox="0 0 52 116" preserveAspectRatio="none"><rect width="100" height="200" fill="#fff"/><rect x="3" y="4.0" width="14" height="0.9" fill="#b8b8b8"/><rect x="4" y="8.3" width="21" height="0.9" fill="#b8b8b8"/><rect x="5" y="12.6" width="28" height="0.9" fill="#b8b8b8"/><rect x="6" y="16.9" width="35" height="0.9" fill="#b8b8b8"/><rect x="7" y="21.2" width="42" height="0.9" fill="#b8b8b8"/><rect x="8" y="25.5" width="19" height="0.9" fill="#b8b8b8"/><rect x="3" y="29.8" width="26" height="0.9" fill="#b8b8b8"/><rect x="4" y="34.1" width="33" height="0.9" fill="#b8b8b8"/><rect x="5" y="38.4" width="40" height="0.9" fill="#b8b8b8"/><rect x="6" y="42.7" width="17" height="0.9" fill="#b8b8b8"/><rect x="7" y="47.0" width="24" height="0.9" fill="#b8b8b8"/><rect x="8" y="51.3" width="31" height="0.9" fill="#b8b8b8"/><rect x="3" y="55.6" width="38" height="0.9" fill="#b8b8b8"/><rect x="4" y="59.9" width="15" height="0.9" fill="#b8b8b8"/><rect x="5" y="64.2" width="22" height="0.9" fill="#b8b8b8"/><rect x="6" y="68.5" width="29" height="0.9" fill="#b8b8b8"/><rect x="7" y="72.8" width="36" height="0.9" fill="#b8b8b8"/><rect x="8" y="77.1" width="43" height="0.9" fill="#b8b8b8"/><rect x="3" y="81.4" width="20" height="0.9" fill="#b8b8b8"/><rect x="4" y="85.7" width="27" height="0.9" fill="#b8b8b8"/><rect x="5" y="90.0" width="34" height="0.9" fill="#b8b8b8"/><rect x="6" y="94.3" width="41" height="0.9" fill="#b8b8b8"/><rect x="7" y="98.6" width="18" height="0.9" fill="#b8b8b8"/><rect x="8" y="102.9" width="25" height="0.9" fill="#b8b8b8"/><rect x="3" y="107.2" width="32" height="0.9" fill="#b8b8b8"/><rect x="4" y="111.5" width="39" height="0.9" fill="#b8b8b8"/></svg>
<div style="position:absolute;left:3376px;top:2723px;width:60px;height:126px;background:#0b0b0b;border-radius:7px;box-shadow:0 1px 2px rgba(0,0,0,0.3);"></div>
<svg style="position:absolute;left:3381px;top:2728px;" width="50" height="116" viewBox="0 0 52 116" preserveAspectRatio="none"><rect width="100" height="200" fill="#fff"/><rect x="3" y="4.0" width="14" height="0.9" fill="#b8b8b8"/><rect x="4" y="8.3" width="21" height="0.9" fill="#b8b8b8"/><rect x="5" y="12.6" width="28" height="0.9" fill="#b8b8b8"/><rect x="6" y="16.9" width="35" height="0.9" fill="#b8b8b8"/><rect x="7" y="21.2" width="42" height="0.9" fill="#b8b8b8"/><rect x="8" y="25.5" width="19" height="0.9" fill="#b8b8b8"/><rect x="3" y="29.8" width="26" height="0.9" fill="#b8b8b8"/><rect x="4" y="34.1" width="33" height="0.9" fill="#b8b8b8"/><rect x="5" y="38.4" width="40" height="0.9" fill="#b8b8b8"/><rect x="6" y="42.7" width="17" height="0.9" fill="#b8b8b8"/><rect x="7" y="47.0" width="24" height="0.9" fill="#b8b8b8"/><rect x="8" y="51.3" width="31" height="0.9" fill="#b8b8b8"/><rect x="3" y="55.6" width="38" height="0.9" fill="#b8b8b8"/><rect x="4" y="59.9" width="15" height="0.9" fill="#b8b8b8"/><rect x="5" y="64.2" width="22" height="0.9" fill="#b8b8b8"/><rect x="6" y="68.5" width="29" height="0.9" fill="#b8b8b8"/><rect x="7" y="72.8" width="36" height="0.9" fill="#b8b8b8"/><rect x="8" y="77.1" width="43" height="0.9" fill="#b8b8b8"/><rect x="3" y="81.4" width="20" height="0.9" fill="#b8b8b8"/><rect x="4" y="85.7" width="27" height="0.9" fill="#b8b8b8"/><rect x="5" y="90.0" width="34" height="0.9" fill="#b8b8b8"/><rect x="6" y="94.3" width="41" height="0.9" fill="#b8b8b8"/><rect x="7" y="98.6" width="18" height="0.9" fill="#b8b8b8"/><rect x="8" y="102.9" width="25" height="0.9" fill="#b8b8b8"/><rect x="3" y="107.2" width="32" height="0.9" fill="#b8b8b8"/><rect x="4" y="111.5" width="39" height="0.9" fill="#b8b8b8"/></svg>
<div style="position:absolute;left:3647px;top:2723px;width:62px;height:126px;background:#0b0b0b;border-radius:7px;box-shadow:0 1px 2px rgba(0,0,0,0.3);"></div>
<svg style="position:absolute;left:3652px;top:2728px;" width="52" height="116" viewBox="0 0 52 116" preserveAspectRatio="none"><rect width="100" height="200" fill="#fff"/><rect x="3" y="4.0" width="14" height="0.9" fill="#b8b8b8"/><rect x="4" y="8.3" width="21" height="0.9" fill="#b8b8b8"/><rect x="5" y="12.6" width="28" height="0.9" fill="#b8b8b8"/><rect x="6" y="16.9" width="35" height="0.9" fill="#b8b8b8"/><rect x="7" y="21.2" width="42" height="0.9" fill="#b8b8b8"/><rect x="8" y="25.5" width="19" height="0.9" fill="#b8b8b8"/><rect x="3" y="29.8" width="26" height="0.9" fill="#b8b8b8"/><rect x="4" y="34.1" width="33" height="0.9" fill="#b8b8b8"/><rect x="5" y="38.4" width="40" height="0.9" fill="#b8b8b8"/><rect x="6" y="42.7" width="17" height="0.9" fill="#b8b8b8"/><rect x="7" y="47.0" width="24" height="0.9" fill="#b8b8b8"/><rect x="8" y="51.3" width="31" height="0.9" fill="#b8b8b8"/><rect x="3" y="55.6" width="38" height="0.9" fill="#b8b8b8"/><rect x="4" y="59.9" width="15" height="0.9" fill="#b8b8b8"/><rect x="5" y="64.2" width="22" height="0.9" fill="#b8b8b8"/><rect x="6" y="68.5" width="29" height="0.9" fill="#b8b8b8"/><rect x="7" y="72.8" width="36" height="0.9" fill="#b8b8b8"/><rect x="8" y="77.1" width="43" height="0.9" fill="#b8b8b8"/><rect x="3" y="81.4" width="20" height="0.9" fill="#b8b8b8"/><rect x="4" y="85.7" width="27" height="0.9" fill="#b8b8b8"/><rect x="5" y="90.0" width="34" height="0.9" fill="#b8b8b8"/><rect x="6" y="94.3" width="41" height="0.9" fill="#b8b8b8"/><rect x="7" y="98.6" width="18" height="0.9" fill="#b8b8b8"/><rect x="8" y="102.9" width="25" height="0.9" fill="#b8b8b8"/><rect x="3" y="107.2" width="32" height="0.9" fill="#b8b8b8"/><rect x="4" y="111.5" width="39" height="0.9" fill="#b8b8b8"/></svg>
<div style="position:absolute;left:3783px;top:2723px;width:61px;height:126px;background:#0b0b0b;border-radius:7px;box-shadow:0 1px 2px rgba(0,0,0,0.3);"></div>
<svg style="position:absolute;left:3788px;top:2728px;" width="51" height="116" viewBox="0 0 52 116" preserveAspectRatio="none"><rect width="100" height="200" fill="#fff"/><rect x="3" y="4.0" width="14" height="0.9" fill="#b8b8b8"/><rect x="4" y="8.3" width="21" height="0.9" fill="#b8b8b8"/><rect x="5" y="12.6" width="28" height="0.9" fill="#b8b8b8"/><rect x="6" y="16.9" width="35" height="0.9" fill="#b8b8b8"/><rect x="7" y="21.2" width="42" height="0.9" fill="#b8b8b8"/><rect x="8" y="25.5" width="19" height="0.9" fill="#b8b8b8"/><rect x="3" y="29.8" width="26" height="0.9" fill="#b8b8b8"/><rect x="4" y="34.1" width="33" height="0.9" fill="#b8b8b8"/><rect x="5" y="38.4" width="40" height="0.9" fill="#b8b8b8"/><rect x="6" y="42.7" width="17" height="0.9" fill="#b8b8b8"/><rect x="7" y="47.0" width="24" height="0.9" fill="#b8b8b8"/><rect x="8" y="51.3" width="31" height="0.9" fill="#b8b8b8"/><rect x="3" y="55.6" width="38" height="0.9" fill="#b8b8b8"/><rect x="4" y="59.9" width="15" height="0.9" fill="#b8b8b8"/><rect x="5" y="64.2" width="22" height="0.9" fill="#b8b8b8"/><rect x="6" y="68.5" width="29" height="0.9" fill="#b8b8b8"/><rect x="7" y="72.8" width="36" height="0.9" fill="#b8b8b8"/><rect x="8" y="77.1" width="43" height="0.9" fill="#b8b8b8"/><rect x="3" y="81.4" width="20" height="0.9" fill="#b8b8b8"/><rect x="4" y="85.7" width="27" height="0.9" fill="#b8b8b8"/><rect x="5" y="90.0" width="34" height="0.9" fill="#b8b8b8"/><rect x="6" y="94.3" width="41" height="0.9" fill="#b8b8b8"/><rect x="7" y="98.6" width="18" height="0.9" fill="#b8b8b8"/><rect x="8" y="102.9" width="25" height="0.9" fill="#b8b8b8"/><rect x="3" y="107.2" width="32" height="0.9" fill="#b8b8b8"/><rect x="4" y="111.5" width="39" height="0.9" fill="#b8b8b8"/></svg>
<div style="position:absolute;left:3919px;top:2723px;width:61px;height:126px;background:#0b0b0b;border-radius:7px;box-shadow:0 1px 2px rgba(0,0,0,0.3);"></div>
<svg style="position:absolute;left:3924px;top:2728px;" width="51" height="116" viewBox="0 0 52 116" preserveAspectRatio="none"><rect width="100" height="200" fill="#fff"/><rect x="3" y="4.0" width="14" height="0.9" fill="#b8b8b8"/><rect x="4" y="8.3" width="21" height="0.9" fill="#b8b8b8"/><rect x="5" y="12.6" width="28" height="0.9" fill="#b8b8b8"/><rect x="6" y="16.9" width="35" height="0.9" fill="#b8b8b8"/><rect x="7" y="21.2" width="42" height="0.9" fill="#b8b8b8"/><rect x="8" y="25.5" width="19" height="0.9" fill="#b8b8b8"/><rect x="3" y="29.8" width="26" height="0.9" fill="#b8b8b8"/><rect x="4" y="34.1" width="33" height="0.9" fill="#b8b8b8"/><rect x="5" y="38.4" width="40" height="0.9" fill="#b8b8b8"/><rect x="6" y="42.7" width="17" height="0.9" fill="#b8b8b8"/><rect x="7" y="47.0" width="24" height="0.9" fill="#b8b8b8"/><rect x="8" y="51.3" width="31" height="0.9" fill="#b8b8b8"/><rect x="3" y="55.6" width="38" height="0.9" fill="#b8b8b8"/><rect x="4" y="59.9" width="15" height="0.9" fill="#b8b8b8"/><rect x="5" y="64.2" width="22" height="0.9" fill="#b8b8b8"/><rect x="6" y="68.5" width="29" height="0.9" fill="#b8b8b8"/><rect x="7" y="72.8" width="36" height="0.9" fill="#b8b8b8"/><rect x="8" y="77.1" width="43" height="0.9" fill="#b8b8b8"/><rect x="3" y="81.4" width="20" height="0.9" fill="#b8b8b8"/><rect x="4" y="85.7" width="27" height="0.9" fill="#b8b8b8"/><rect x="5" y="90.0" width="34" height="0.9" fill="#b8b8b8"/><rect x="6" y="94.3" width="41" height="0.9" fill="#b8b8b8"/><rect x="7" y="98.6" width="18" height="0.9" fill="#b8b8b8"/><rect x="8" y="102.9" width="25" height="0.9" fill="#b8b8b8"/><rect x="3" y="107.2" width="32" height="0.9" fill="#b8b8b8"/><rect x="4" y="111.5" width="39" height="0.9" fill="#b8b8b8"/></svg>
<div style="position:absolute;left:3482px;top:2734px;width:120px;height:103px;background:#1e1f22;"></div>
<svg style="position:absolute;left:3482px;top:2734px;" width="120" height="103" viewBox="0 0 120 103" preserveAspectRatio="none"><rect x="8" y="4.0" width="20" height="1" fill="#6b6b6b"/><rect x="12" y="7.5" width="23" height="1" fill="#6b6b6b"/><rect x="16" y="11.0" width="26" height="1" fill="#6b6b6b"/><rect x="8" y="14.5" width="29" height="1" fill="#6b6b6b"/><rect x="12" y="18.0" width="32" height="1" fill="#6b6b6b"/><rect x="16" y="21.5" width="35" height="1" fill="#6b6b6b"/><rect x="8" y="25.0" width="38" height="1" fill="#6b6b6b"/><rect x="12" y="28.5" width="41" height="1" fill="#6b6b6b"/><rect x="16" y="32.0" width="44" height="1" fill="#6b6b6b"/><rect x="8" y="35.5" width="47" height="1" fill="#6b6b6b"/><rect x="12" y="39.0" width="50" height="1" fill="#6b6b6b"/><rect x="16" y="42.5" width="53" height="1" fill="#6b6b6b"/><rect x="8" y="46.0" width="56" height="1" fill="#6b6b6b"/><rect x="12" y="49.5" width="59" height="1" fill="#6b6b6b"/><rect x="16" y="53.0" width="62" height="1" fill="#6b6b6b"/><rect x="8" y="56.5" width="65" height="1" fill="#6b6b6b"/><rect x="12" y="60.0" width="68" height="1" fill="#6b6b6b"/><rect x="16" y="63.5" width="21" height="1" fill="#6b6b6b"/><rect x="8" y="67.0" width="24" height="1" fill="#6b6b6b"/><rect x="12" y="70.5" width="27" height="1" fill="#6b6b6b"/><rect x="16" y="74.0" width="30" height="1" fill="#6b6b6b"/><rect x="8" y="77.5" width="33" height="1" fill="#6b6b6b"/><rect x="12" y="81.0" width="36" height="1" fill="#6b6b6b"/><rect x="16" y="84.5" width="39" height="1" fill="#6b6b6b"/><rect x="8" y="88.0" width="42" height="1" fill="#6b6b6b"/><rect x="12" y="91.5" width="45" height="1" fill="#6b6b6b"/><rect x="16" y="95.0" width="48" height="1" fill="#6b6b6b"/><rect x="8" y="98.5" width="51" height="1" fill="#6b6b6b"/></svg>
<svg style="position:absolute;left:3561px;top:2805px;" width="38" height="38" viewBox="0 0 38 38" preserveAspectRatio="none"><rect width="38" height="38" rx="8" fill="#fff"/><path d="M26 5 L32 8 V30 L26 33 L13 21 L7 26 L4 24 V14 L7 12 L13 17 Z M26 12 L18 19 L26 26 Z" fill="#1f8ad6"/></svg>
<div style="position:absolute;left:4026px;top:2734px;width:120px;height:103px;background:#1e1f22;"></div>
<svg style="position:absolute;left:4026px;top:2734px;" width="120" height="103" viewBox="0 0 120 103" preserveAspectRatio="none"><rect x="8" y="4.0" width="20" height="1" fill="#6b6b6b"/><rect x="12" y="7.5" width="23" height="1" fill="#6b6b6b"/><rect x="16" y="11.0" width="26" height="1" fill="#6b6b6b"/><rect x="8" y="14.5" width="29" height="1" fill="#6b6b6b"/><rect x="12" y="18.0" width="32" height="1" fill="#6b6b6b"/><rect x="16" y="21.5" width="35" height="1" fill="#6b6b6b"/><rect x="8" y="25.0" width="38" height="1" fill="#6b6b6b"/><rect x="12" y="28.5" width="41" height="1" fill="#6b6b6b"/><rect x="16" y="32.0" width="44" height="1" fill="#6b6b6b"/><rect x="8" y="35.5" width="47" height="1" fill="#6b6b6b"/><rect x="12" y="39.0" width="50" height="1" fill="#6b6b6b"/><rect x="16" y="42.5" width="53" height="1" fill="#6b6b6b"/><rect x="8" y="46.0" width="56" height="1" fill="#6b6b6b"/><rect x="12" y="49.5" width="59" height="1" fill="#6b6b6b"/><rect x="16" y="53.0" width="62" height="1" fill="#6b6b6b"/><rect x="8" y="56.5" width="65" height="1" fill="#6b6b6b"/><rect x="12" y="60.0" width="68" height="1" fill="#6b6b6b"/><rect x="16" y="63.5" width="21" height="1" fill="#6b6b6b"/><rect x="8" y="67.0" width="24" height="1" fill="#6b6b6b"/><rect x="12" y="70.5" width="27" height="1" fill="#6b6b6b"/><rect x="16" y="74.0" width="30" height="1" fill="#6b6b6b"/><rect x="8" y="77.5" width="33" height="1" fill="#6b6b6b"/><rect x="12" y="81.0" width="36" height="1" fill="#6b6b6b"/><rect x="16" y="84.5" width="39" height="1" fill="#6b6b6b"/><rect x="8" y="88.0" width="42" height="1" fill="#6b6b6b"/><rect x="12" y="91.5" width="45" height="1" fill="#6b6b6b"/><rect x="16" y="95.0" width="48" height="1" fill="#6b6b6b"/><rect x="8" y="98.5" width="51" height="1" fill="#6b6b6b"/></svg>
<svg style="position:absolute;left:4105px;top:2805px;" width="38" height="38" viewBox="0 0 38 38" preserveAspectRatio="none"><rect width="38" height="38" rx="8" fill="#fff"/><path d="M26 5 L32 8 V30 L26 33 L13 21 L7 26 L4 24 V14 L7 12 L13 17 Z M26 12 L18 19 L26 26 Z" fill="#1f8ad6"/></svg>
<div style="position:absolute;left:3756px;top:2822px;width:121px;height:27px;background:rgba(90,90,92,0.75);border-radius:14px;"></div>
<div style="position:absolute;left:3769.13px;top:2822.08px;font-family:'Liberation Sans', sans-serif;font-size:24.71px;line-height:24.71px;font-weight:400;color:#fff;white-space:pre;will-change:transform;-webkit-text-stroke:0.45px #fff;transform-origin:0 20.92px;transform:scale(0.8717,1.0000);">doltgres...</div>
<svg style="position:absolute;left:4176px;top:2730px;" width="92" height="115" viewBox="0 0 92 115" preserveAspectRatio="none"><defs><linearGradient id="tg" x1="0" y1="0" x2="1" y2="0"><stop offset="0" stop-color="#dcdddf"/><stop offset="0.45" stop-color="#eceded"/><stop offset="1" stop-color="#e2e3e5"/></linearGradient><linearGradient id="tg2" x1="0" y1="0" x2="0" y2="1"><stop offset="0" stop-color="#ffffff" stop-opacity="0"/><stop offset="1" stop-color="#ffffff" stop-opacity="0.7"/></linearGradient></defs><path d="M1 11.5 L12 103 Q14 113 46 113 Q78 113 80 103 L91 11.5 Z" fill="url(#tg)"/><path d="M10 85 L12 103 Q14 113 46 113 Q78 113 80 103 L82 85 Z" fill="url(#tg2)"/><ellipse cx="46" cy="11.5" rx="45" ry="11" fill="#eeeff0"/><ellipse cx="46" cy="13" rx="41" ry="8.5" fill="#f6f6f7"/></svg>
</div></body></html>
